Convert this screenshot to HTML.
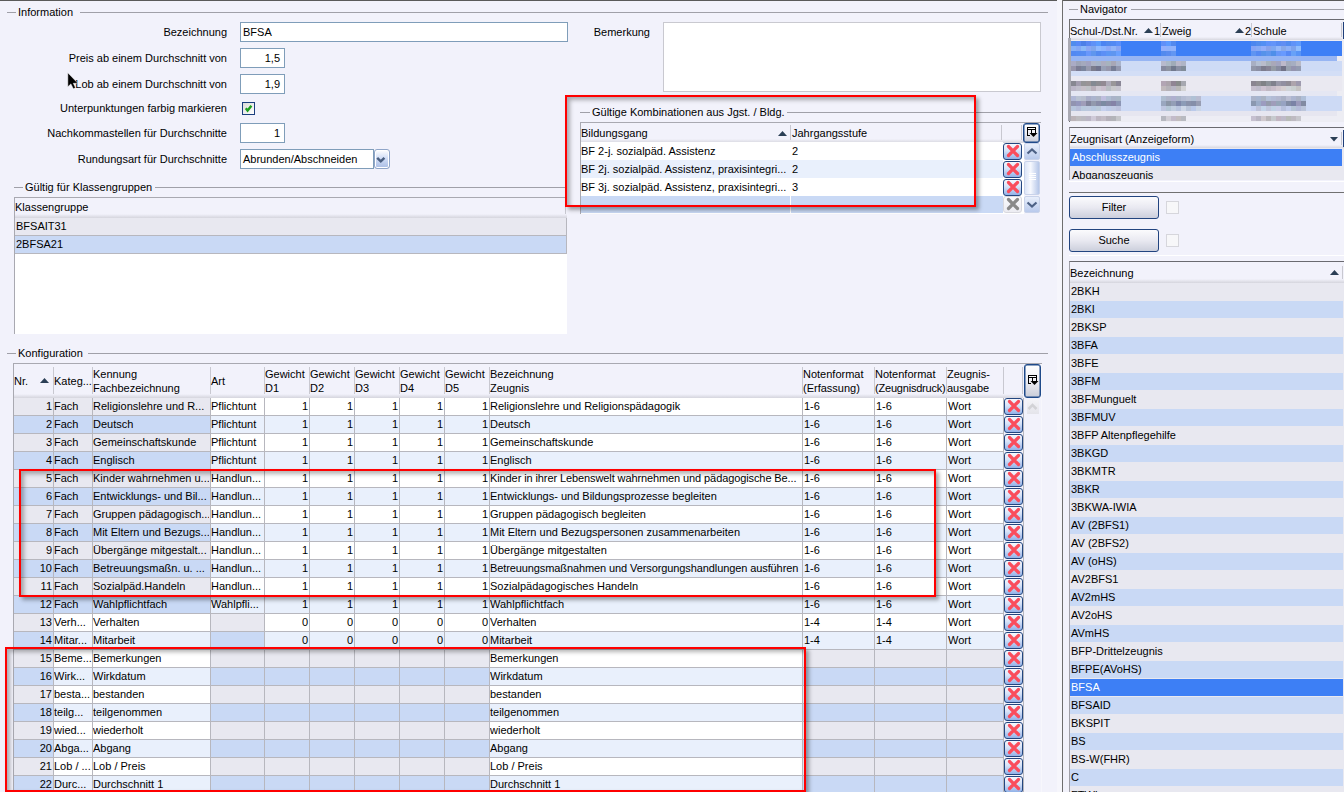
<!DOCTYPE html>
<html><head><meta charset="utf-8"><style>
html,body{margin:0;padding:0;}
body{width:1344px;height:792px;overflow:hidden;position:relative;background:#F2F2FB;font-family:"Liberation Sans",sans-serif;font-size:11px;color:#000;}
body div{position:absolute;white-space:nowrap;}
.inp{background:#fff;border:1px solid #7F9DB9;box-sizing:border-box;}
.db{width:19px;height:17px;box-sizing:border-box;border:1px solid #23467F;border-radius:3px;background:linear-gradient(#F6F8FD,#D6E2F8 45%,#91B2E8);}
.dbd{width:19px;height:17px;box-sizing:border-box;border:1px solid #D8D8DE;border-radius:3px;background:linear-gradient(#FAFAFC,#ECECF2);}
.db svg,.dbd svg{position:absolute;left:-1px;top:-1px;}
</style></head><body>

<div style="left:0px;top:0px;width:1057px;height:1px;background:#5A5A5A"></div>
<div style="left:1062px;top:0px;width:282px;height:1px;background:#5A5A5A"></div>
<div style="left:7px;top:12px;width:9px;height:1px;background:#A0A0A8"></div>
<div style="left:18px;top:6px;line-height:13px;">Information</div>
<div style="left:80px;top:12px;width:968px;height:1px;background:#A0A0A8"></div>
<div style="left:-173px;top:26px;line-height:13px;width:400px;text-align:right;">Bezeichnung</div>
<div style="left:-173px;top:52px;line-height:13px;width:400px;text-align:right;">Preis ab einem Durchschnitt von</div>
<div style="left:-173px;top:78px;line-height:13px;width:400px;text-align:right;">Lob ab einem Durchschnitt von</div>
<div style="left:-173px;top:102px;line-height:13px;width:400px;text-align:right;">Unterpunktungen farbig markieren</div>
<div style="left:-173px;top:127px;line-height:13px;width:400px;text-align:right;">Nachkommastellen f&uuml;r Durchschnitte</div>
<div style="left:-173px;top:153px;line-height:13px;width:400px;text-align:right;">Rundungsart f&uuml;r Durchschnitte</div>
<div class="inp" style="left:240px;top:22px;width:328px;height:20px"></div>
<div style="left:243px;top:26px;line-height:13px;">BFSA</div>
<div class="inp" style="left:240px;top:48px;width:45px;height:20px"></div>
<div style="left:-120px;top:52px;line-height:13px;width:400px;text-align:right;">1,5</div>
<div class="inp" style="left:240px;top:74px;width:45px;height:20px"></div>
<div style="left:-120px;top:78px;line-height:13px;width:400px;text-align:right;">1,9</div>
<div class="inp" style="left:240px;top:123px;width:45px;height:20px"></div>
<div style="left:-120px;top:127px;line-height:13px;width:400px;text-align:right;">1</div>
<div style="left:242px;top:102px;width:13px;height:13px;box-sizing:border-box;border:1px solid #1C3F7E;background:linear-gradient(135deg,#DCDCD7,#FFFFFF)"><svg width="11" height="11" style="position:absolute;left:0;top:0"><path d="M2.8 5.2L4.6 7.6L8.4 2.8" stroke="#1FA01F" stroke-width="2.4" fill="none"/></svg></div>
<div class="inp" style="left:240px;top:149px;width:134px;height:20px"></div>
<div style="left:243px;top:153px;line-height:13px;">Abrunden/Abschneiden</div>
<div style="left:374px;top:149px;width:16px;height:20px;box-sizing:border-box;border:1px solid #8FA5C8;border-radius:3px;box-shadow:inset 0 0 0 1px #FFFFFF;background:linear-gradient(#FFFFFF,#D2DEF6 45%,#A9BDE4)"><svg width="14" height="18" style="position:absolute;left:0;top:0"><path d="M2.2 7.8L5.8 11.4L9.4 7.8" stroke="#4A5F80" stroke-width="2.4" fill="none"/></svg></div>
<div style="left:250px;top:26px;line-height:13px;width:400px;text-align:right;">Bemerkung</div>
<div style="left:663px;top:22px;width:378px;height:70px;box-sizing:border-box;border:1px solid #C9C9D0;background:#fff"></div>
<svg style="position:absolute;left:67px;top:72px" width="14" height="20" viewBox="0 0 14 20"><path d="M0.8 0.8L0.8 14.8L3.9 11.9L6.3 16.8L8.5 15.8L6.3 11.3L10.9 11.3Z" fill="#000" stroke="#fff" stroke-width="0.5"/></svg>
<div style="left:14px;top:187px;width:9px;height:1px;background:#A0A0A8"></div>
<div style="left:25px;top:181px;line-height:13px;">G&uuml;ltig f&uuml;r Klassengruppen</div>
<div style="left:155px;top:187px;width:412px;height:1px;background:#A0A0A8"></div>
<div style="left:14px;top:197px;width:553px;height:137px;background:#fff;border-top:1px solid #A9A9B1;border-left:1px solid #A9A9B1;box-sizing:border-box"></div>
<div style="left:15px;top:198px;width:552px;height:20px;background:#F2F2FB"></div>
<div style="left:15px;top:214px;width:552px;height:4px;background:linear-gradient(#F2F2FB,#D5D5DD)"></div>
<div style="left:15px;top:201px;line-height:13px;">Klassengruppe</div>
<div style="left:15px;top:218px;width:552px;height:18px;background:#E8E8F0;border-bottom:1px solid #B7B7BE;box-sizing:border-box"></div>
<div style="left:16px;top:220px;line-height:13px;">BFSAIT31</div>
<div style="left:15px;top:236px;width:552px;height:18px;background:#C9D9F5;border-bottom:1px solid #B7B7BE;box-sizing:border-box"></div>
<div style="left:16px;top:238px;line-height:13px;">2BFSA21</div>
<div style="left:565px;top:199px;width:1px;height:15px;background:#C8C8D0"></div>
<div style="left:566px;top:218px;width:1px;height:36px;background:#B7B7BE"></div>
<div style="left:580px;top:112px;width:10px;height:1px;background:#A0A0A8"></div>
<div style="left:592px;top:106px;line-height:13px;">G&uuml;ltige Kombinationen aus Jgst. / Bldg.</div>
<div style="left:787px;top:112px;width:254px;height:1px;background:#A0A0A8"></div>
<div style="left:580px;top:122px;width:461px;height:92px;border-top:1px solid #A9A9B1;box-sizing:border-box"></div>
<div style="left:580px;top:122px;width:444px;height:92px;background:#fff;border-top:1px solid #A9A9B1;border-left:1px solid #A9A9B1;box-sizing:border-box"></div>
<div style="left:581px;top:123px;width:443px;height:19px;background:#F2F2FB"></div>
<div style="left:581px;top:139px;width:443px;height:4px;background:linear-gradient(#F2F2FB,#D5D5DD)"></div>
<div style="left:581px;top:127px;line-height:13px;">Bildungsgang</div>
<div style="left:792px;top:127px;line-height:13px;">Jahrgangsstufe</div>
<div style="left:790px;top:125px;width:1px;height:15px;background:#C8C8D0"></div>
<div style="left:1001px;top:125px;width:1px;height:15px;background:#C8C8D0"></div>
<div style="left:1021px;top:125px;width:1px;height:15px;background:#C8C8D0"></div>
<svg style="position:absolute;left:778px;top:131px" width="9" height="5"><path d="M0 5L4.5 0L9 5Z" fill="#2B3F55"/></svg>
<div style="left:581px;top:142px;width:422px;height:18px;background:#FFFFFF"></div>
<div style="left:581px;top:145px;line-height:13px;">BF 2-j. sozialp&auml;d. Assistenz</div>
<div style="left:792px;top:145px;line-height:13px;">2</div>
<div class="db" style="left:1003px;top:143px"><svg width="19" height="17" viewBox="0 0 19 17"><path d="M5.5 3.5L14.5 12.5M14.5 3.5L5.5 12.5" stroke="#FA4D5C" stroke-width="3.2" stroke-linecap="round"/></svg></div>
<div style="left:581px;top:160px;width:422px;height:18px;background:#E9F0FC"></div>
<div style="left:581px;top:163px;line-height:13px;">BF 2j. sozialp&auml;d. Assistenz, praxisintegri...</div>
<div style="left:792px;top:163px;line-height:13px;">2</div>
<div class="db" style="left:1003px;top:161px"><svg width="19" height="17" viewBox="0 0 19 17"><path d="M5.5 3.5L14.5 12.5M14.5 3.5L5.5 12.5" stroke="#FA4D5C" stroke-width="3.2" stroke-linecap="round"/></svg></div>
<div style="left:581px;top:178px;width:422px;height:18px;background:#FFFFFF"></div>
<div style="left:581px;top:181px;line-height:13px;">BF 3j. sozialp&auml;d. Assistenz, praxisintegri...</div>
<div style="left:792px;top:181px;line-height:13px;">3</div>
<div class="db" style="left:1003px;top:179px"><svg width="19" height="17" viewBox="0 0 19 17"><path d="M5.5 3.5L14.5 12.5M14.5 3.5L5.5 12.5" stroke="#FA4D5C" stroke-width="3.2" stroke-linecap="round"/></svg></div>
<div style="left:581px;top:196px;width:422px;height:17px;background:#C9D9F5"></div>
<div style="left:790px;top:196px;width:1px;height:17px;background:#fff"></div>
<div class="dbd" style="left:1003px;top:196px"><svg width="19" height="17" viewBox="0 0 19 17"><path d="M5.5 3.5L14.5 12.5M14.5 3.5L5.5 12.5" stroke="#8A8A8A" stroke-width="3.2" stroke-linecap="round"/></svg></div>
<div style="left:1023px;top:123px;width:17px;height:20px;box-sizing:border-box;border:1px solid #1F4A8A;border-radius:3px;box-shadow:inset 0 0 0 0.5px #1F4A8A;background:linear-gradient(#FFFFFF,#EEEEF4 50%,#C9CCD8)"><svg width="17" height="20" style="position:absolute;left:-1px;top:-1px"><path d="M4 4.5H13M4 6.5H13M4.5 4V13M12.5 4V10M8.5 6V10M4 12.5H7" stroke="#000" stroke-width="1" fill="none"/><path d="M5 5.5H12" stroke="#fff" stroke-width="1" stroke-dasharray="2 1"/><path d="M6.5 10H14.5L10.5 14Z" fill="#000"/></svg></div>
<div style="left:1024px;top:143px;width:16px;height:17px;box-sizing:border-box;border:1px solid #C9D3EA;border-radius:2px;background:linear-gradient(#E9EFFB,#B9CAEC)"><svg width="14" height="15" style="position:absolute;left:0;top:0"><path d="M2.5 9.5L7 5.5L11.5 9.5" stroke="#4D6185" stroke-width="2.2" fill="none"/></svg></div>
<div style="left:1024px;top:161px;width:16px;height:34px;box-sizing:border-box;border:1px solid #C9D3EA;border-radius:2px;background:linear-gradient(90deg,#DDE6F8,#F6F8FE 40%,#B5C6E8)"></div>
<div style="left:1029px;top:173px;width:7px;height:1px;background:#FFFFFF"></div>
<div style="left:1029px;top:175px;width:7px;height:1px;background:#FFFFFF"></div>
<div style="left:1029px;top:177px;width:7px;height:1px;background:#FFFFFF"></div>
<div style="left:1029px;top:179px;width:7px;height:1px;background:#FFFFFF"></div>
<div style="left:1024px;top:196px;width:16px;height:17px;box-sizing:border-box;border:1px solid #C9D3EA;border-radius:2px;background:linear-gradient(#E9EFFB,#B9CAEC)"><svg width="14" height="15" style="position:absolute;left:0;top:0"><path d="M2.5 5.5L7 9.5L11.5 5.5" stroke="#4D6185" stroke-width="2.2" fill="none"/></svg></div>
<div style="left:7px;top:353px;width:9px;height:1px;background:#A0A0A8"></div>
<div style="left:18px;top:347px;line-height:13px;">Konfiguration</div>
<div style="left:88px;top:353px;width:960px;height:1px;background:#A0A0A8"></div>
<div style="left:13px;top:363px;width:1029px;height:429px;border-top:1px solid #A9A9B1;border-left:1px solid #A9A9B1;box-sizing:border-box"></div>
<div style="left:14px;top:364px;width:1009px;height:34px;background:#F2F2FB"></div>
<div style="left:14px;top:394px;width:1009px;height:4px;background:linear-gradient(#F2F2FB,#D5D5DD)"></div>
<div style="left:1022px;top:367px;width:1px;height:27px;background:#C8C8D0"></div>
<div style="left:53px;top:367px;width:1px;height:27px;background:#C8C8D0"></div>
<div style="left:92px;top:367px;width:1px;height:27px;background:#C8C8D0"></div>
<div style="left:210px;top:367px;width:1px;height:27px;background:#C8C8D0"></div>
<div style="left:264px;top:367px;width:1px;height:27px;background:#C8C8D0"></div>
<div style="left:309px;top:367px;width:1px;height:27px;background:#C8C8D0"></div>
<div style="left:354px;top:367px;width:1px;height:27px;background:#C8C8D0"></div>
<div style="left:399px;top:367px;width:1px;height:27px;background:#C8C8D0"></div>
<div style="left:444px;top:367px;width:1px;height:27px;background:#C8C8D0"></div>
<div style="left:489px;top:367px;width:1px;height:27px;background:#C8C8D0"></div>
<div style="left:802px;top:367px;width:1px;height:27px;background:#C8C8D0"></div>
<div style="left:874px;top:367px;width:1px;height:27px;background:#C8C8D0"></div>
<div style="left:946px;top:367px;width:1px;height:27px;background:#C8C8D0"></div>
<div style="left:1003px;top:367px;width:1px;height:27px;background:#C8C8D0"></div>
<div style="left:14px;top:375px;line-height:13px;">Nr.</div>
<svg style="position:absolute;left:40px;top:378px" width="9" height="5"><path d="M0 5L4.5 0L9 5Z" fill="#2B3F55"/></svg>
<div style="left:54px;top:375px;line-height:13px;">Kateg...</div>
<div style="left:93px;top:368px;line-height:13px;">Kennung</div>
<div style="left:93px;top:382px;line-height:13px;">Fachbezeichnung</div>
<div style="left:265px;top:368px;line-height:13px;">Gewicht</div>
<div style="left:265px;top:382px;line-height:13px;">D1</div>
<div style="left:310px;top:368px;line-height:13px;">Gewicht</div>
<div style="left:310px;top:382px;line-height:13px;">D2</div>
<div style="left:355px;top:368px;line-height:13px;">Gewicht</div>
<div style="left:355px;top:382px;line-height:13px;">D3</div>
<div style="left:400px;top:368px;line-height:13px;">Gewicht</div>
<div style="left:400px;top:382px;line-height:13px;">D4</div>
<div style="left:445px;top:368px;line-height:13px;">Gewicht</div>
<div style="left:445px;top:382px;line-height:13px;">D5</div>
<div style="left:490px;top:368px;line-height:13px;">Bezeichnung</div>
<div style="left:490px;top:382px;line-height:13px;">Zeugnis</div>
<div style="left:803px;top:368px;line-height:13px;">Notenformat</div>
<div style="left:803px;top:382px;line-height:13px;">(Erfassung)</div>
<div style="left:875px;top:368px;line-height:13px;">Notenformat</div>
<div style="left:875px;top:382px;line-height:13px;letter-spacing:-0.2px">(Zeugnisdruck)</div>
<div style="left:947px;top:368px;line-height:13px;">Zeugnis-</div>
<div style="left:947px;top:382px;line-height:13px;">ausgabe</div>
<div style="left:211px;top:375px;line-height:13px;">Art</div>
<div style="left:1024px;top:364px;width:17px;height:34px;box-sizing:border-box;border:1px solid #1F4A8A;border-radius:3px;box-shadow:inset 0 0 0 0.5px #1F4A8A;background:linear-gradient(#FFFFFF,#EEEEF4 50%,#C9CCD8)"><svg width="17" height="34" style="position:absolute;left:-1px;top:-1px"><path d="M4 11.5H13M4 13.5H13M4.5 11V20M12.5 11V17M8.5 13V17M4 19.5H7" stroke="#000" stroke-width="1" fill="none"/><path d="M5 12.5H12" stroke="#fff" stroke-width="1" stroke-dasharray="2 1"/><path d="M6.5 17H14.5L10.5 21Z" fill="#000"/></svg></div>
<div style="left:1027px;top:399px;width:12px;height:15px;background:linear-gradient(#F4F4F8,#E4E4EA)"><svg width="12" height="15" style="position:absolute;left:0;top:0"><path d="M1.5 10L5.5 6L9.5 10" stroke="#D2D2D6" stroke-width="2.5" fill="none"/></svg></div>
<div style="left:14px;top:398px;width:39px;height:17px;background:#E8E8F0"></div>
<div style="left:54px;top:398px;width:38px;height:17px;background:#E8E8F0"></div>
<div style="left:93px;top:398px;width:117px;height:17px;background:#E8E8F0"></div>
<div style="left:211px;top:398px;width:53px;height:17px;background:#FFFFFF"></div>
<div style="left:265px;top:398px;width:44px;height:17px;background:#FFFFFF"></div>
<div style="left:310px;top:398px;width:44px;height:17px;background:#FFFFFF"></div>
<div style="left:355px;top:398px;width:44px;height:17px;background:#FFFFFF"></div>
<div style="left:400px;top:398px;width:44px;height:17px;background:#FFFFFF"></div>
<div style="left:445px;top:398px;width:44px;height:17px;background:#FFFFFF"></div>
<div style="left:490px;top:398px;width:312px;height:17px;background:#FFFFFF"></div>
<div style="left:803px;top:398px;width:71px;height:17px;background:#FFFFFF"></div>
<div style="left:875px;top:398px;width:71px;height:17px;background:#FFFFFF"></div>
<div style="left:947px;top:398px;width:56px;height:17px;background:#FFFFFF"></div>
<div style="left:14px;top:415px;width:989px;height:1px;background:#B7B7BE"></div>
<div style="left:-348px;top:400px;line-height:13px;width:400px;text-align:right;">1</div>
<div style="left:54px;top:400px;line-height:13px;overflow:hidden;width:38px">Fach</div>
<div style="left:93px;top:400px;line-height:13px;overflow:hidden;width:116px">Religionslehre und R...</div>
<div style="left:211px;top:400px;line-height:13px;">Pflichtunt</div>
<div style="left:-92px;top:400px;line-height:13px;width:400px;text-align:right;">1</div>
<div style="left:-47px;top:400px;line-height:13px;width:400px;text-align:right;">1</div>
<div style="left:-2px;top:400px;line-height:13px;width:400px;text-align:right;">1</div>
<div style="left:43px;top:400px;line-height:13px;width:400px;text-align:right;">1</div>
<div style="left:88px;top:400px;line-height:13px;width:400px;text-align:right;">1</div>
<div style="left:490px;top:400px;line-height:13px;">Religionslehre und Religionsp&auml;dagogik</div>
<div style="left:804px;top:400px;line-height:13px;">1-6</div>
<div style="left:876px;top:400px;line-height:13px;">1-6</div>
<div style="left:948px;top:400px;line-height:13px;">Wort</div>
<div class="db" style="left:1004px;top:398px"><svg width="19" height="17" viewBox="0 0 19 17"><path d="M5.5 3.5L14.5 12.5M14.5 3.5L5.5 12.5" stroke="#FA4D5C" stroke-width="3.2" stroke-linecap="round"/></svg></div>
<div style="left:14px;top:416px;width:39px;height:17px;background:#C9D9F5"></div>
<div style="left:54px;top:416px;width:38px;height:17px;background:#C9D9F5"></div>
<div style="left:93px;top:416px;width:117px;height:17px;background:#C9D9F5"></div>
<div style="left:211px;top:416px;width:53px;height:17px;background:#E9F0FC"></div>
<div style="left:265px;top:416px;width:44px;height:17px;background:#E9F0FC"></div>
<div style="left:310px;top:416px;width:44px;height:17px;background:#E9F0FC"></div>
<div style="left:355px;top:416px;width:44px;height:17px;background:#E9F0FC"></div>
<div style="left:400px;top:416px;width:44px;height:17px;background:#E9F0FC"></div>
<div style="left:445px;top:416px;width:44px;height:17px;background:#E9F0FC"></div>
<div style="left:490px;top:416px;width:312px;height:17px;background:#E9F0FC"></div>
<div style="left:803px;top:416px;width:71px;height:17px;background:#E9F0FC"></div>
<div style="left:875px;top:416px;width:71px;height:17px;background:#E9F0FC"></div>
<div style="left:947px;top:416px;width:56px;height:17px;background:#E9F0FC"></div>
<div style="left:14px;top:433px;width:989px;height:1px;background:#B7B7BE"></div>
<div style="left:-348px;top:418px;line-height:13px;width:400px;text-align:right;">2</div>
<div style="left:54px;top:418px;line-height:13px;overflow:hidden;width:38px">Fach</div>
<div style="left:93px;top:418px;line-height:13px;overflow:hidden;width:116px">Deutsch</div>
<div style="left:211px;top:418px;line-height:13px;">Pflichtunt</div>
<div style="left:-92px;top:418px;line-height:13px;width:400px;text-align:right;">1</div>
<div style="left:-47px;top:418px;line-height:13px;width:400px;text-align:right;">1</div>
<div style="left:-2px;top:418px;line-height:13px;width:400px;text-align:right;">1</div>
<div style="left:43px;top:418px;line-height:13px;width:400px;text-align:right;">1</div>
<div style="left:88px;top:418px;line-height:13px;width:400px;text-align:right;">1</div>
<div style="left:490px;top:418px;line-height:13px;">Deutsch</div>
<div style="left:804px;top:418px;line-height:13px;">1-6</div>
<div style="left:876px;top:418px;line-height:13px;">1-6</div>
<div style="left:948px;top:418px;line-height:13px;">Wort</div>
<div class="db" style="left:1004px;top:416px"><svg width="19" height="17" viewBox="0 0 19 17"><path d="M5.5 3.5L14.5 12.5M14.5 3.5L5.5 12.5" stroke="#FA4D5C" stroke-width="3.2" stroke-linecap="round"/></svg></div>
<div style="left:14px;top:434px;width:39px;height:17px;background:#E8E8F0"></div>
<div style="left:54px;top:434px;width:38px;height:17px;background:#E8E8F0"></div>
<div style="left:93px;top:434px;width:117px;height:17px;background:#E8E8F0"></div>
<div style="left:211px;top:434px;width:53px;height:17px;background:#FFFFFF"></div>
<div style="left:265px;top:434px;width:44px;height:17px;background:#FFFFFF"></div>
<div style="left:310px;top:434px;width:44px;height:17px;background:#FFFFFF"></div>
<div style="left:355px;top:434px;width:44px;height:17px;background:#FFFFFF"></div>
<div style="left:400px;top:434px;width:44px;height:17px;background:#FFFFFF"></div>
<div style="left:445px;top:434px;width:44px;height:17px;background:#FFFFFF"></div>
<div style="left:490px;top:434px;width:312px;height:17px;background:#FFFFFF"></div>
<div style="left:803px;top:434px;width:71px;height:17px;background:#FFFFFF"></div>
<div style="left:875px;top:434px;width:71px;height:17px;background:#FFFFFF"></div>
<div style="left:947px;top:434px;width:56px;height:17px;background:#FFFFFF"></div>
<div style="left:14px;top:451px;width:989px;height:1px;background:#B7B7BE"></div>
<div style="left:-348px;top:436px;line-height:13px;width:400px;text-align:right;">3</div>
<div style="left:54px;top:436px;line-height:13px;overflow:hidden;width:38px">Fach</div>
<div style="left:93px;top:436px;line-height:13px;overflow:hidden;width:116px">Gemeinschaftskunde</div>
<div style="left:211px;top:436px;line-height:13px;">Pflichtunt</div>
<div style="left:-92px;top:436px;line-height:13px;width:400px;text-align:right;">1</div>
<div style="left:-47px;top:436px;line-height:13px;width:400px;text-align:right;">1</div>
<div style="left:-2px;top:436px;line-height:13px;width:400px;text-align:right;">1</div>
<div style="left:43px;top:436px;line-height:13px;width:400px;text-align:right;">1</div>
<div style="left:88px;top:436px;line-height:13px;width:400px;text-align:right;">1</div>
<div style="left:490px;top:436px;line-height:13px;">Gemeinschaftskunde</div>
<div style="left:804px;top:436px;line-height:13px;">1-6</div>
<div style="left:876px;top:436px;line-height:13px;">1-6</div>
<div style="left:948px;top:436px;line-height:13px;">Wort</div>
<div class="db" style="left:1004px;top:434px"><svg width="19" height="17" viewBox="0 0 19 17"><path d="M5.5 3.5L14.5 12.5M14.5 3.5L5.5 12.5" stroke="#FA4D5C" stroke-width="3.2" stroke-linecap="round"/></svg></div>
<div style="left:14px;top:452px;width:39px;height:17px;background:#C9D9F5"></div>
<div style="left:54px;top:452px;width:38px;height:17px;background:#C9D9F5"></div>
<div style="left:93px;top:452px;width:117px;height:17px;background:#C9D9F5"></div>
<div style="left:211px;top:452px;width:53px;height:17px;background:#E9F0FC"></div>
<div style="left:265px;top:452px;width:44px;height:17px;background:#E9F0FC"></div>
<div style="left:310px;top:452px;width:44px;height:17px;background:#E9F0FC"></div>
<div style="left:355px;top:452px;width:44px;height:17px;background:#E9F0FC"></div>
<div style="left:400px;top:452px;width:44px;height:17px;background:#E9F0FC"></div>
<div style="left:445px;top:452px;width:44px;height:17px;background:#E9F0FC"></div>
<div style="left:490px;top:452px;width:312px;height:17px;background:#E9F0FC"></div>
<div style="left:803px;top:452px;width:71px;height:17px;background:#E9F0FC"></div>
<div style="left:875px;top:452px;width:71px;height:17px;background:#E9F0FC"></div>
<div style="left:947px;top:452px;width:56px;height:17px;background:#E9F0FC"></div>
<div style="left:14px;top:469px;width:989px;height:1px;background:#B7B7BE"></div>
<div style="left:-348px;top:454px;line-height:13px;width:400px;text-align:right;">4</div>
<div style="left:54px;top:454px;line-height:13px;overflow:hidden;width:38px">Fach</div>
<div style="left:93px;top:454px;line-height:13px;overflow:hidden;width:116px">Englisch</div>
<div style="left:211px;top:454px;line-height:13px;">Pflichtunt</div>
<div style="left:-92px;top:454px;line-height:13px;width:400px;text-align:right;">1</div>
<div style="left:-47px;top:454px;line-height:13px;width:400px;text-align:right;">1</div>
<div style="left:-2px;top:454px;line-height:13px;width:400px;text-align:right;">1</div>
<div style="left:43px;top:454px;line-height:13px;width:400px;text-align:right;">1</div>
<div style="left:88px;top:454px;line-height:13px;width:400px;text-align:right;">1</div>
<div style="left:490px;top:454px;line-height:13px;">Englisch</div>
<div style="left:804px;top:454px;line-height:13px;">1-6</div>
<div style="left:876px;top:454px;line-height:13px;">1-6</div>
<div style="left:948px;top:454px;line-height:13px;">Wort</div>
<div class="db" style="left:1004px;top:452px"><svg width="19" height="17" viewBox="0 0 19 17"><path d="M5.5 3.5L14.5 12.5M14.5 3.5L5.5 12.5" stroke="#FA4D5C" stroke-width="3.2" stroke-linecap="round"/></svg></div>
<div style="left:14px;top:470px;width:39px;height:17px;background:#E8E8F0"></div>
<div style="left:54px;top:470px;width:38px;height:17px;background:#E8E8F0"></div>
<div style="left:93px;top:470px;width:117px;height:17px;background:#E8E8F0"></div>
<div style="left:211px;top:470px;width:53px;height:17px;background:#FFFFFF"></div>
<div style="left:265px;top:470px;width:44px;height:17px;background:#FFFFFF"></div>
<div style="left:310px;top:470px;width:44px;height:17px;background:#FFFFFF"></div>
<div style="left:355px;top:470px;width:44px;height:17px;background:#FFFFFF"></div>
<div style="left:400px;top:470px;width:44px;height:17px;background:#FFFFFF"></div>
<div style="left:445px;top:470px;width:44px;height:17px;background:#FFFFFF"></div>
<div style="left:490px;top:470px;width:312px;height:17px;background:#FFFFFF"></div>
<div style="left:803px;top:470px;width:71px;height:17px;background:#FFFFFF"></div>
<div style="left:875px;top:470px;width:71px;height:17px;background:#FFFFFF"></div>
<div style="left:947px;top:470px;width:56px;height:17px;background:#FFFFFF"></div>
<div style="left:14px;top:487px;width:989px;height:1px;background:#B7B7BE"></div>
<div style="left:-348px;top:472px;line-height:13px;width:400px;text-align:right;">5</div>
<div style="left:54px;top:472px;line-height:13px;overflow:hidden;width:38px">Fach</div>
<div style="left:93px;top:472px;line-height:13px;overflow:hidden;width:116px">Kinder wahrnehmen u...</div>
<div style="left:211px;top:472px;line-height:13px;">Handlun...</div>
<div style="left:-92px;top:472px;line-height:13px;width:400px;text-align:right;">1</div>
<div style="left:-47px;top:472px;line-height:13px;width:400px;text-align:right;">1</div>
<div style="left:-2px;top:472px;line-height:13px;width:400px;text-align:right;">1</div>
<div style="left:43px;top:472px;line-height:13px;width:400px;text-align:right;">1</div>
<div style="left:88px;top:472px;line-height:13px;width:400px;text-align:right;">1</div>
<div style="left:490px;top:472px;line-height:13px;letter-spacing:-0.1px">Kinder in ihrer Lebenswelt wahrnehmen und p&auml;dagogische Be...</div>
<div style="left:804px;top:472px;line-height:13px;">1-6</div>
<div style="left:876px;top:472px;line-height:13px;">1-6</div>
<div style="left:948px;top:472px;line-height:13px;">Wort</div>
<div class="db" style="left:1004px;top:470px"><svg width="19" height="17" viewBox="0 0 19 17"><path d="M5.5 3.5L14.5 12.5M14.5 3.5L5.5 12.5" stroke="#FA4D5C" stroke-width="3.2" stroke-linecap="round"/></svg></div>
<div style="left:14px;top:488px;width:39px;height:17px;background:#C9D9F5"></div>
<div style="left:54px;top:488px;width:38px;height:17px;background:#C9D9F5"></div>
<div style="left:93px;top:488px;width:117px;height:17px;background:#C9D9F5"></div>
<div style="left:211px;top:488px;width:53px;height:17px;background:#E9F0FC"></div>
<div style="left:265px;top:488px;width:44px;height:17px;background:#E9F0FC"></div>
<div style="left:310px;top:488px;width:44px;height:17px;background:#E9F0FC"></div>
<div style="left:355px;top:488px;width:44px;height:17px;background:#E9F0FC"></div>
<div style="left:400px;top:488px;width:44px;height:17px;background:#E9F0FC"></div>
<div style="left:445px;top:488px;width:44px;height:17px;background:#E9F0FC"></div>
<div style="left:490px;top:488px;width:312px;height:17px;background:#E9F0FC"></div>
<div style="left:803px;top:488px;width:71px;height:17px;background:#E9F0FC"></div>
<div style="left:875px;top:488px;width:71px;height:17px;background:#E9F0FC"></div>
<div style="left:947px;top:488px;width:56px;height:17px;background:#E9F0FC"></div>
<div style="left:14px;top:505px;width:989px;height:1px;background:#B7B7BE"></div>
<div style="left:-348px;top:490px;line-height:13px;width:400px;text-align:right;">6</div>
<div style="left:54px;top:490px;line-height:13px;overflow:hidden;width:38px">Fach</div>
<div style="left:93px;top:490px;line-height:13px;overflow:hidden;width:116px">Entwicklungs- und Bil...</div>
<div style="left:211px;top:490px;line-height:13px;">Handlun...</div>
<div style="left:-92px;top:490px;line-height:13px;width:400px;text-align:right;">1</div>
<div style="left:-47px;top:490px;line-height:13px;width:400px;text-align:right;">1</div>
<div style="left:-2px;top:490px;line-height:13px;width:400px;text-align:right;">1</div>
<div style="left:43px;top:490px;line-height:13px;width:400px;text-align:right;">1</div>
<div style="left:88px;top:490px;line-height:13px;width:400px;text-align:right;">1</div>
<div style="left:490px;top:490px;line-height:13px;">Entwicklungs- und Bildungsprozesse begleiten</div>
<div style="left:804px;top:490px;line-height:13px;">1-6</div>
<div style="left:876px;top:490px;line-height:13px;">1-6</div>
<div style="left:948px;top:490px;line-height:13px;">Wort</div>
<div class="db" style="left:1004px;top:488px"><svg width="19" height="17" viewBox="0 0 19 17"><path d="M5.5 3.5L14.5 12.5M14.5 3.5L5.5 12.5" stroke="#FA4D5C" stroke-width="3.2" stroke-linecap="round"/></svg></div>
<div style="left:14px;top:506px;width:39px;height:17px;background:#E8E8F0"></div>
<div style="left:54px;top:506px;width:38px;height:17px;background:#E8E8F0"></div>
<div style="left:93px;top:506px;width:117px;height:17px;background:#E8E8F0"></div>
<div style="left:211px;top:506px;width:53px;height:17px;background:#FFFFFF"></div>
<div style="left:265px;top:506px;width:44px;height:17px;background:#FFFFFF"></div>
<div style="left:310px;top:506px;width:44px;height:17px;background:#FFFFFF"></div>
<div style="left:355px;top:506px;width:44px;height:17px;background:#FFFFFF"></div>
<div style="left:400px;top:506px;width:44px;height:17px;background:#FFFFFF"></div>
<div style="left:445px;top:506px;width:44px;height:17px;background:#FFFFFF"></div>
<div style="left:490px;top:506px;width:312px;height:17px;background:#FFFFFF"></div>
<div style="left:803px;top:506px;width:71px;height:17px;background:#FFFFFF"></div>
<div style="left:875px;top:506px;width:71px;height:17px;background:#FFFFFF"></div>
<div style="left:947px;top:506px;width:56px;height:17px;background:#FFFFFF"></div>
<div style="left:14px;top:523px;width:989px;height:1px;background:#B7B7BE"></div>
<div style="left:-348px;top:508px;line-height:13px;width:400px;text-align:right;">7</div>
<div style="left:54px;top:508px;line-height:13px;overflow:hidden;width:38px">Fach</div>
<div style="left:93px;top:508px;line-height:13px;overflow:hidden;width:116px">Gruppen p&auml;dagogisch...</div>
<div style="left:211px;top:508px;line-height:13px;">Handlun...</div>
<div style="left:-92px;top:508px;line-height:13px;width:400px;text-align:right;">1</div>
<div style="left:-47px;top:508px;line-height:13px;width:400px;text-align:right;">1</div>
<div style="left:-2px;top:508px;line-height:13px;width:400px;text-align:right;">1</div>
<div style="left:43px;top:508px;line-height:13px;width:400px;text-align:right;">1</div>
<div style="left:88px;top:508px;line-height:13px;width:400px;text-align:right;">1</div>
<div style="left:490px;top:508px;line-height:13px;">Gruppen p&auml;dagogisch begleiten</div>
<div style="left:804px;top:508px;line-height:13px;">1-6</div>
<div style="left:876px;top:508px;line-height:13px;">1-6</div>
<div style="left:948px;top:508px;line-height:13px;">Wort</div>
<div class="db" style="left:1004px;top:506px"><svg width="19" height="17" viewBox="0 0 19 17"><path d="M5.5 3.5L14.5 12.5M14.5 3.5L5.5 12.5" stroke="#FA4D5C" stroke-width="3.2" stroke-linecap="round"/></svg></div>
<div style="left:14px;top:524px;width:39px;height:17px;background:#C9D9F5"></div>
<div style="left:54px;top:524px;width:38px;height:17px;background:#C9D9F5"></div>
<div style="left:93px;top:524px;width:117px;height:17px;background:#C9D9F5"></div>
<div style="left:211px;top:524px;width:53px;height:17px;background:#E9F0FC"></div>
<div style="left:265px;top:524px;width:44px;height:17px;background:#E9F0FC"></div>
<div style="left:310px;top:524px;width:44px;height:17px;background:#E9F0FC"></div>
<div style="left:355px;top:524px;width:44px;height:17px;background:#E9F0FC"></div>
<div style="left:400px;top:524px;width:44px;height:17px;background:#E9F0FC"></div>
<div style="left:445px;top:524px;width:44px;height:17px;background:#E9F0FC"></div>
<div style="left:490px;top:524px;width:312px;height:17px;background:#E9F0FC"></div>
<div style="left:803px;top:524px;width:71px;height:17px;background:#E9F0FC"></div>
<div style="left:875px;top:524px;width:71px;height:17px;background:#E9F0FC"></div>
<div style="left:947px;top:524px;width:56px;height:17px;background:#E9F0FC"></div>
<div style="left:14px;top:541px;width:989px;height:1px;background:#B7B7BE"></div>
<div style="left:-348px;top:526px;line-height:13px;width:400px;text-align:right;">8</div>
<div style="left:54px;top:526px;line-height:13px;overflow:hidden;width:38px">Fach</div>
<div style="left:93px;top:526px;line-height:13px;overflow:hidden;width:116px">Mit Eltern und Bezugs...</div>
<div style="left:211px;top:526px;line-height:13px;">Handlun...</div>
<div style="left:-92px;top:526px;line-height:13px;width:400px;text-align:right;">1</div>
<div style="left:-47px;top:526px;line-height:13px;width:400px;text-align:right;">1</div>
<div style="left:-2px;top:526px;line-height:13px;width:400px;text-align:right;">1</div>
<div style="left:43px;top:526px;line-height:13px;width:400px;text-align:right;">1</div>
<div style="left:88px;top:526px;line-height:13px;width:400px;text-align:right;">1</div>
<div style="left:490px;top:526px;line-height:13px;">Mit Eltern und Bezugspersonen zusammenarbeiten</div>
<div style="left:804px;top:526px;line-height:13px;">1-6</div>
<div style="left:876px;top:526px;line-height:13px;">1-6</div>
<div style="left:948px;top:526px;line-height:13px;">Wort</div>
<div class="db" style="left:1004px;top:524px"><svg width="19" height="17" viewBox="0 0 19 17"><path d="M5.5 3.5L14.5 12.5M14.5 3.5L5.5 12.5" stroke="#FA4D5C" stroke-width="3.2" stroke-linecap="round"/></svg></div>
<div style="left:14px;top:542px;width:39px;height:17px;background:#E8E8F0"></div>
<div style="left:54px;top:542px;width:38px;height:17px;background:#E8E8F0"></div>
<div style="left:93px;top:542px;width:117px;height:17px;background:#E8E8F0"></div>
<div style="left:211px;top:542px;width:53px;height:17px;background:#FFFFFF"></div>
<div style="left:265px;top:542px;width:44px;height:17px;background:#FFFFFF"></div>
<div style="left:310px;top:542px;width:44px;height:17px;background:#FFFFFF"></div>
<div style="left:355px;top:542px;width:44px;height:17px;background:#FFFFFF"></div>
<div style="left:400px;top:542px;width:44px;height:17px;background:#FFFFFF"></div>
<div style="left:445px;top:542px;width:44px;height:17px;background:#FFFFFF"></div>
<div style="left:490px;top:542px;width:312px;height:17px;background:#FFFFFF"></div>
<div style="left:803px;top:542px;width:71px;height:17px;background:#FFFFFF"></div>
<div style="left:875px;top:542px;width:71px;height:17px;background:#FFFFFF"></div>
<div style="left:947px;top:542px;width:56px;height:17px;background:#FFFFFF"></div>
<div style="left:14px;top:559px;width:989px;height:1px;background:#B7B7BE"></div>
<div style="left:-348px;top:544px;line-height:13px;width:400px;text-align:right;">9</div>
<div style="left:54px;top:544px;line-height:13px;overflow:hidden;width:38px">Fach</div>
<div style="left:93px;top:544px;line-height:13px;overflow:hidden;width:116px">&Uuml;berg&auml;nge mitgestalt...</div>
<div style="left:211px;top:544px;line-height:13px;">Handlun...</div>
<div style="left:-92px;top:544px;line-height:13px;width:400px;text-align:right;">1</div>
<div style="left:-47px;top:544px;line-height:13px;width:400px;text-align:right;">1</div>
<div style="left:-2px;top:544px;line-height:13px;width:400px;text-align:right;">1</div>
<div style="left:43px;top:544px;line-height:13px;width:400px;text-align:right;">1</div>
<div style="left:88px;top:544px;line-height:13px;width:400px;text-align:right;">1</div>
<div style="left:490px;top:544px;line-height:13px;">&Uuml;berg&auml;nge mitgestalten</div>
<div style="left:804px;top:544px;line-height:13px;">1-6</div>
<div style="left:876px;top:544px;line-height:13px;">1-6</div>
<div style="left:948px;top:544px;line-height:13px;">Wort</div>
<div class="db" style="left:1004px;top:542px"><svg width="19" height="17" viewBox="0 0 19 17"><path d="M5.5 3.5L14.5 12.5M14.5 3.5L5.5 12.5" stroke="#FA4D5C" stroke-width="3.2" stroke-linecap="round"/></svg></div>
<div style="left:14px;top:560px;width:39px;height:17px;background:#C9D9F5"></div>
<div style="left:54px;top:560px;width:38px;height:17px;background:#C9D9F5"></div>
<div style="left:93px;top:560px;width:117px;height:17px;background:#C9D9F5"></div>
<div style="left:211px;top:560px;width:53px;height:17px;background:#E9F0FC"></div>
<div style="left:265px;top:560px;width:44px;height:17px;background:#E9F0FC"></div>
<div style="left:310px;top:560px;width:44px;height:17px;background:#E9F0FC"></div>
<div style="left:355px;top:560px;width:44px;height:17px;background:#E9F0FC"></div>
<div style="left:400px;top:560px;width:44px;height:17px;background:#E9F0FC"></div>
<div style="left:445px;top:560px;width:44px;height:17px;background:#E9F0FC"></div>
<div style="left:490px;top:560px;width:312px;height:17px;background:#E9F0FC"></div>
<div style="left:803px;top:560px;width:71px;height:17px;background:#E9F0FC"></div>
<div style="left:875px;top:560px;width:71px;height:17px;background:#E9F0FC"></div>
<div style="left:947px;top:560px;width:56px;height:17px;background:#E9F0FC"></div>
<div style="left:14px;top:577px;width:989px;height:1px;background:#B7B7BE"></div>
<div style="left:-348px;top:562px;line-height:13px;width:400px;text-align:right;">10</div>
<div style="left:54px;top:562px;line-height:13px;overflow:hidden;width:38px">Fach</div>
<div style="left:93px;top:562px;line-height:13px;overflow:hidden;width:116px">Betreuungsma&szlig;n. u. ...</div>
<div style="left:211px;top:562px;line-height:13px;">Handlun...</div>
<div style="left:-92px;top:562px;line-height:13px;width:400px;text-align:right;">1</div>
<div style="left:-47px;top:562px;line-height:13px;width:400px;text-align:right;">1</div>
<div style="left:-2px;top:562px;line-height:13px;width:400px;text-align:right;">1</div>
<div style="left:43px;top:562px;line-height:13px;width:400px;text-align:right;">1</div>
<div style="left:88px;top:562px;line-height:13px;width:400px;text-align:right;">1</div>
<div style="left:490px;top:562px;line-height:13px;letter-spacing:-0.1px">Betreuungsma&szlig;nahmen und Versorgungshandlungen ausf&uuml;hren</div>
<div style="left:804px;top:562px;line-height:13px;">1-6</div>
<div style="left:876px;top:562px;line-height:13px;">1-6</div>
<div style="left:948px;top:562px;line-height:13px;">Wort</div>
<div class="db" style="left:1004px;top:560px"><svg width="19" height="17" viewBox="0 0 19 17"><path d="M5.5 3.5L14.5 12.5M14.5 3.5L5.5 12.5" stroke="#FA4D5C" stroke-width="3.2" stroke-linecap="round"/></svg></div>
<div style="left:14px;top:578px;width:39px;height:17px;background:#E8E8F0"></div>
<div style="left:54px;top:578px;width:38px;height:17px;background:#E8E8F0"></div>
<div style="left:93px;top:578px;width:117px;height:17px;background:#E8E8F0"></div>
<div style="left:211px;top:578px;width:53px;height:17px;background:#FFFFFF"></div>
<div style="left:265px;top:578px;width:44px;height:17px;background:#FFFFFF"></div>
<div style="left:310px;top:578px;width:44px;height:17px;background:#FFFFFF"></div>
<div style="left:355px;top:578px;width:44px;height:17px;background:#FFFFFF"></div>
<div style="left:400px;top:578px;width:44px;height:17px;background:#FFFFFF"></div>
<div style="left:445px;top:578px;width:44px;height:17px;background:#FFFFFF"></div>
<div style="left:490px;top:578px;width:312px;height:17px;background:#FFFFFF"></div>
<div style="left:803px;top:578px;width:71px;height:17px;background:#FFFFFF"></div>
<div style="left:875px;top:578px;width:71px;height:17px;background:#FFFFFF"></div>
<div style="left:947px;top:578px;width:56px;height:17px;background:#FFFFFF"></div>
<div style="left:14px;top:595px;width:989px;height:1px;background:#B7B7BE"></div>
<div style="left:-348px;top:580px;line-height:13px;width:400px;text-align:right;">11</div>
<div style="left:54px;top:580px;line-height:13px;overflow:hidden;width:38px">Fach</div>
<div style="left:93px;top:580px;line-height:13px;overflow:hidden;width:116px">Sozialp&auml;d.Handeln</div>
<div style="left:211px;top:580px;line-height:13px;">Handlun...</div>
<div style="left:-92px;top:580px;line-height:13px;width:400px;text-align:right;">1</div>
<div style="left:-47px;top:580px;line-height:13px;width:400px;text-align:right;">1</div>
<div style="left:-2px;top:580px;line-height:13px;width:400px;text-align:right;">1</div>
<div style="left:43px;top:580px;line-height:13px;width:400px;text-align:right;">1</div>
<div style="left:88px;top:580px;line-height:13px;width:400px;text-align:right;">1</div>
<div style="left:490px;top:580px;line-height:13px;">Sozialp&auml;dagogisches Handeln</div>
<div style="left:804px;top:580px;line-height:13px;">1-6</div>
<div style="left:876px;top:580px;line-height:13px;">1-6</div>
<div style="left:948px;top:580px;line-height:13px;">Wort</div>
<div class="db" style="left:1004px;top:578px"><svg width="19" height="17" viewBox="0 0 19 17"><path d="M5.5 3.5L14.5 12.5M14.5 3.5L5.5 12.5" stroke="#FA4D5C" stroke-width="3.2" stroke-linecap="round"/></svg></div>
<div style="left:14px;top:596px;width:39px;height:17px;background:#C9D9F5"></div>
<div style="left:54px;top:596px;width:38px;height:17px;background:#C9D9F5"></div>
<div style="left:93px;top:596px;width:117px;height:17px;background:#C9D9F5"></div>
<div style="left:211px;top:596px;width:53px;height:17px;background:#E9F0FC"></div>
<div style="left:265px;top:596px;width:44px;height:17px;background:#E9F0FC"></div>
<div style="left:310px;top:596px;width:44px;height:17px;background:#E9F0FC"></div>
<div style="left:355px;top:596px;width:44px;height:17px;background:#E9F0FC"></div>
<div style="left:400px;top:596px;width:44px;height:17px;background:#E9F0FC"></div>
<div style="left:445px;top:596px;width:44px;height:17px;background:#E9F0FC"></div>
<div style="left:490px;top:596px;width:312px;height:17px;background:#E9F0FC"></div>
<div style="left:803px;top:596px;width:71px;height:17px;background:#E9F0FC"></div>
<div style="left:875px;top:596px;width:71px;height:17px;background:#E9F0FC"></div>
<div style="left:947px;top:596px;width:56px;height:17px;background:#E9F0FC"></div>
<div style="left:14px;top:613px;width:989px;height:1px;background:#B7B7BE"></div>
<div style="left:-348px;top:598px;line-height:13px;width:400px;text-align:right;">12</div>
<div style="left:54px;top:598px;line-height:13px;overflow:hidden;width:38px">Fach</div>
<div style="left:93px;top:598px;line-height:13px;overflow:hidden;width:116px">Wahlpflichtfach</div>
<div style="left:211px;top:598px;line-height:13px;">Wahlpfli...</div>
<div style="left:-92px;top:598px;line-height:13px;width:400px;text-align:right;">1</div>
<div style="left:-47px;top:598px;line-height:13px;width:400px;text-align:right;">1</div>
<div style="left:-2px;top:598px;line-height:13px;width:400px;text-align:right;">1</div>
<div style="left:43px;top:598px;line-height:13px;width:400px;text-align:right;">1</div>
<div style="left:88px;top:598px;line-height:13px;width:400px;text-align:right;">1</div>
<div style="left:490px;top:598px;line-height:13px;">Wahlpflichtfach</div>
<div style="left:804px;top:598px;line-height:13px;">1-6</div>
<div style="left:876px;top:598px;line-height:13px;">1-6</div>
<div style="left:948px;top:598px;line-height:13px;">Wort</div>
<div class="db" style="left:1004px;top:596px"><svg width="19" height="17" viewBox="0 0 19 17"><path d="M5.5 3.5L14.5 12.5M14.5 3.5L5.5 12.5" stroke="#FA4D5C" stroke-width="3.2" stroke-linecap="round"/></svg></div>
<div style="left:14px;top:614px;width:39px;height:17px;background:#E8E8F0"></div>
<div style="left:54px;top:614px;width:38px;height:17px;background:#FFFFFF"></div>
<div style="left:93px;top:614px;width:117px;height:17px;background:#FFFFFF"></div>
<div style="left:211px;top:614px;width:53px;height:17px;background:#E8E8F0"></div>
<div style="left:265px;top:614px;width:44px;height:17px;background:#FFFFFF"></div>
<div style="left:310px;top:614px;width:44px;height:17px;background:#FFFFFF"></div>
<div style="left:355px;top:614px;width:44px;height:17px;background:#FFFFFF"></div>
<div style="left:400px;top:614px;width:44px;height:17px;background:#FFFFFF"></div>
<div style="left:445px;top:614px;width:44px;height:17px;background:#FFFFFF"></div>
<div style="left:490px;top:614px;width:312px;height:17px;background:#FFFFFF"></div>
<div style="left:803px;top:614px;width:71px;height:17px;background:#FFFFFF"></div>
<div style="left:875px;top:614px;width:71px;height:17px;background:#FFFFFF"></div>
<div style="left:947px;top:614px;width:56px;height:17px;background:#FFFFFF"></div>
<div style="left:14px;top:631px;width:989px;height:1px;background:#B7B7BE"></div>
<div style="left:-348px;top:616px;line-height:13px;width:400px;text-align:right;">13</div>
<div style="left:54px;top:616px;line-height:13px;overflow:hidden;width:38px">Verh...</div>
<div style="left:93px;top:616px;line-height:13px;overflow:hidden;width:116px">Verhalten</div>
<div style="left:-92px;top:616px;line-height:13px;width:400px;text-align:right;">0</div>
<div style="left:-47px;top:616px;line-height:13px;width:400px;text-align:right;">0</div>
<div style="left:-2px;top:616px;line-height:13px;width:400px;text-align:right;">0</div>
<div style="left:43px;top:616px;line-height:13px;width:400px;text-align:right;">0</div>
<div style="left:88px;top:616px;line-height:13px;width:400px;text-align:right;">0</div>
<div style="left:490px;top:616px;line-height:13px;">Verhalten</div>
<div style="left:804px;top:616px;line-height:13px;">1-4</div>
<div style="left:876px;top:616px;line-height:13px;">1-4</div>
<div style="left:948px;top:616px;line-height:13px;">Wort</div>
<div class="db" style="left:1004px;top:614px"><svg width="19" height="17" viewBox="0 0 19 17"><path d="M5.5 3.5L14.5 12.5M14.5 3.5L5.5 12.5" stroke="#FA4D5C" stroke-width="3.2" stroke-linecap="round"/></svg></div>
<div style="left:14px;top:632px;width:39px;height:17px;background:#C9D9F5"></div>
<div style="left:54px;top:632px;width:38px;height:17px;background:#E9F0FC"></div>
<div style="left:93px;top:632px;width:117px;height:17px;background:#E9F0FC"></div>
<div style="left:211px;top:632px;width:53px;height:17px;background:#C9D9F5"></div>
<div style="left:265px;top:632px;width:44px;height:17px;background:#E9F0FC"></div>
<div style="left:310px;top:632px;width:44px;height:17px;background:#E9F0FC"></div>
<div style="left:355px;top:632px;width:44px;height:17px;background:#E9F0FC"></div>
<div style="left:400px;top:632px;width:44px;height:17px;background:#E9F0FC"></div>
<div style="left:445px;top:632px;width:44px;height:17px;background:#E9F0FC"></div>
<div style="left:490px;top:632px;width:312px;height:17px;background:#E9F0FC"></div>
<div style="left:803px;top:632px;width:71px;height:17px;background:#E9F0FC"></div>
<div style="left:875px;top:632px;width:71px;height:17px;background:#E9F0FC"></div>
<div style="left:947px;top:632px;width:56px;height:17px;background:#E9F0FC"></div>
<div style="left:14px;top:649px;width:989px;height:1px;background:#B7B7BE"></div>
<div style="left:-348px;top:634px;line-height:13px;width:400px;text-align:right;">14</div>
<div style="left:54px;top:634px;line-height:13px;overflow:hidden;width:38px">Mitar...</div>
<div style="left:93px;top:634px;line-height:13px;overflow:hidden;width:116px">Mitarbeit</div>
<div style="left:-92px;top:634px;line-height:13px;width:400px;text-align:right;">0</div>
<div style="left:-47px;top:634px;line-height:13px;width:400px;text-align:right;">0</div>
<div style="left:-2px;top:634px;line-height:13px;width:400px;text-align:right;">0</div>
<div style="left:43px;top:634px;line-height:13px;width:400px;text-align:right;">0</div>
<div style="left:88px;top:634px;line-height:13px;width:400px;text-align:right;">0</div>
<div style="left:490px;top:634px;line-height:13px;">Mitarbeit</div>
<div style="left:804px;top:634px;line-height:13px;">1-4</div>
<div style="left:876px;top:634px;line-height:13px;">1-4</div>
<div style="left:948px;top:634px;line-height:13px;">Wort</div>
<div class="db" style="left:1004px;top:632px"><svg width="19" height="17" viewBox="0 0 19 17"><path d="M5.5 3.5L14.5 12.5M14.5 3.5L5.5 12.5" stroke="#FA4D5C" stroke-width="3.2" stroke-linecap="round"/></svg></div>
<div style="left:14px;top:650px;width:39px;height:17px;background:#E8E8F0"></div>
<div style="left:54px;top:650px;width:38px;height:17px;background:#FFFFFF"></div>
<div style="left:93px;top:650px;width:117px;height:17px;background:#FFFFFF"></div>
<div style="left:211px;top:650px;width:53px;height:17px;background:#E8E8F0"></div>
<div style="left:265px;top:650px;width:44px;height:17px;background:#E8E8F0"></div>
<div style="left:310px;top:650px;width:44px;height:17px;background:#E8E8F0"></div>
<div style="left:355px;top:650px;width:44px;height:17px;background:#E8E8F0"></div>
<div style="left:400px;top:650px;width:44px;height:17px;background:#E8E8F0"></div>
<div style="left:445px;top:650px;width:44px;height:17px;background:#E8E8F0"></div>
<div style="left:490px;top:650px;width:312px;height:17px;background:#FFFFFF"></div>
<div style="left:803px;top:650px;width:71px;height:17px;background:#E8E8F0"></div>
<div style="left:875px;top:650px;width:71px;height:17px;background:#E8E8F0"></div>
<div style="left:947px;top:650px;width:56px;height:17px;background:#E8E8F0"></div>
<div style="left:14px;top:667px;width:989px;height:1px;background:#B7B7BE"></div>
<div style="left:-348px;top:652px;line-height:13px;width:400px;text-align:right;">15</div>
<div style="left:54px;top:652px;line-height:13px;overflow:hidden;width:38px">Beme...</div>
<div style="left:93px;top:652px;line-height:13px;overflow:hidden;width:116px">Bemerkungen</div>
<div style="left:490px;top:652px;line-height:13px;">Bemerkungen</div>
<div class="db" style="left:1004px;top:650px"><svg width="19" height="17" viewBox="0 0 19 17"><path d="M5.5 3.5L14.5 12.5M14.5 3.5L5.5 12.5" stroke="#FA4D5C" stroke-width="3.2" stroke-linecap="round"/></svg></div>
<div style="left:14px;top:668px;width:39px;height:17px;background:#C9D9F5"></div>
<div style="left:54px;top:668px;width:38px;height:17px;background:#E9F0FC"></div>
<div style="left:93px;top:668px;width:117px;height:17px;background:#E9F0FC"></div>
<div style="left:211px;top:668px;width:53px;height:17px;background:#C9D9F5"></div>
<div style="left:265px;top:668px;width:44px;height:17px;background:#C9D9F5"></div>
<div style="left:310px;top:668px;width:44px;height:17px;background:#C9D9F5"></div>
<div style="left:355px;top:668px;width:44px;height:17px;background:#C9D9F5"></div>
<div style="left:400px;top:668px;width:44px;height:17px;background:#C9D9F5"></div>
<div style="left:445px;top:668px;width:44px;height:17px;background:#C9D9F5"></div>
<div style="left:490px;top:668px;width:312px;height:17px;background:#E9F0FC"></div>
<div style="left:803px;top:668px;width:71px;height:17px;background:#C9D9F5"></div>
<div style="left:875px;top:668px;width:71px;height:17px;background:#C9D9F5"></div>
<div style="left:947px;top:668px;width:56px;height:17px;background:#C9D9F5"></div>
<div style="left:14px;top:685px;width:989px;height:1px;background:#B7B7BE"></div>
<div style="left:-348px;top:670px;line-height:13px;width:400px;text-align:right;">16</div>
<div style="left:54px;top:670px;line-height:13px;overflow:hidden;width:38px">Wirk...</div>
<div style="left:93px;top:670px;line-height:13px;overflow:hidden;width:116px">Wirkdatum</div>
<div style="left:490px;top:670px;line-height:13px;">Wirkdatum</div>
<div class="db" style="left:1004px;top:668px"><svg width="19" height="17" viewBox="0 0 19 17"><path d="M5.5 3.5L14.5 12.5M14.5 3.5L5.5 12.5" stroke="#FA4D5C" stroke-width="3.2" stroke-linecap="round"/></svg></div>
<div style="left:14px;top:686px;width:39px;height:17px;background:#E8E8F0"></div>
<div style="left:54px;top:686px;width:38px;height:17px;background:#FFFFFF"></div>
<div style="left:93px;top:686px;width:117px;height:17px;background:#FFFFFF"></div>
<div style="left:211px;top:686px;width:53px;height:17px;background:#E8E8F0"></div>
<div style="left:265px;top:686px;width:44px;height:17px;background:#E8E8F0"></div>
<div style="left:310px;top:686px;width:44px;height:17px;background:#E8E8F0"></div>
<div style="left:355px;top:686px;width:44px;height:17px;background:#E8E8F0"></div>
<div style="left:400px;top:686px;width:44px;height:17px;background:#E8E8F0"></div>
<div style="left:445px;top:686px;width:44px;height:17px;background:#E8E8F0"></div>
<div style="left:490px;top:686px;width:312px;height:17px;background:#FFFFFF"></div>
<div style="left:803px;top:686px;width:71px;height:17px;background:#E8E8F0"></div>
<div style="left:875px;top:686px;width:71px;height:17px;background:#E8E8F0"></div>
<div style="left:947px;top:686px;width:56px;height:17px;background:#E8E8F0"></div>
<div style="left:14px;top:703px;width:989px;height:1px;background:#B7B7BE"></div>
<div style="left:-348px;top:688px;line-height:13px;width:400px;text-align:right;">17</div>
<div style="left:54px;top:688px;line-height:13px;overflow:hidden;width:38px">besta...</div>
<div style="left:93px;top:688px;line-height:13px;overflow:hidden;width:116px">bestanden</div>
<div style="left:490px;top:688px;line-height:13px;">bestanden</div>
<div class="db" style="left:1004px;top:686px"><svg width="19" height="17" viewBox="0 0 19 17"><path d="M5.5 3.5L14.5 12.5M14.5 3.5L5.5 12.5" stroke="#FA4D5C" stroke-width="3.2" stroke-linecap="round"/></svg></div>
<div style="left:14px;top:704px;width:39px;height:17px;background:#C9D9F5"></div>
<div style="left:54px;top:704px;width:38px;height:17px;background:#E9F0FC"></div>
<div style="left:93px;top:704px;width:117px;height:17px;background:#E9F0FC"></div>
<div style="left:211px;top:704px;width:53px;height:17px;background:#C9D9F5"></div>
<div style="left:265px;top:704px;width:44px;height:17px;background:#C9D9F5"></div>
<div style="left:310px;top:704px;width:44px;height:17px;background:#C9D9F5"></div>
<div style="left:355px;top:704px;width:44px;height:17px;background:#C9D9F5"></div>
<div style="left:400px;top:704px;width:44px;height:17px;background:#C9D9F5"></div>
<div style="left:445px;top:704px;width:44px;height:17px;background:#C9D9F5"></div>
<div style="left:490px;top:704px;width:312px;height:17px;background:#E9F0FC"></div>
<div style="left:803px;top:704px;width:71px;height:17px;background:#C9D9F5"></div>
<div style="left:875px;top:704px;width:71px;height:17px;background:#C9D9F5"></div>
<div style="left:947px;top:704px;width:56px;height:17px;background:#C9D9F5"></div>
<div style="left:14px;top:721px;width:989px;height:1px;background:#B7B7BE"></div>
<div style="left:-348px;top:706px;line-height:13px;width:400px;text-align:right;">18</div>
<div style="left:54px;top:706px;line-height:13px;overflow:hidden;width:38px">teilg...</div>
<div style="left:93px;top:706px;line-height:13px;overflow:hidden;width:116px">teilgenommen</div>
<div style="left:490px;top:706px;line-height:13px;">teilgenommen</div>
<div class="db" style="left:1004px;top:704px"><svg width="19" height="17" viewBox="0 0 19 17"><path d="M5.5 3.5L14.5 12.5M14.5 3.5L5.5 12.5" stroke="#FA4D5C" stroke-width="3.2" stroke-linecap="round"/></svg></div>
<div style="left:14px;top:722px;width:39px;height:17px;background:#E8E8F0"></div>
<div style="left:54px;top:722px;width:38px;height:17px;background:#FFFFFF"></div>
<div style="left:93px;top:722px;width:117px;height:17px;background:#FFFFFF"></div>
<div style="left:211px;top:722px;width:53px;height:17px;background:#E8E8F0"></div>
<div style="left:265px;top:722px;width:44px;height:17px;background:#E8E8F0"></div>
<div style="left:310px;top:722px;width:44px;height:17px;background:#E8E8F0"></div>
<div style="left:355px;top:722px;width:44px;height:17px;background:#E8E8F0"></div>
<div style="left:400px;top:722px;width:44px;height:17px;background:#E8E8F0"></div>
<div style="left:445px;top:722px;width:44px;height:17px;background:#E8E8F0"></div>
<div style="left:490px;top:722px;width:312px;height:17px;background:#FFFFFF"></div>
<div style="left:803px;top:722px;width:71px;height:17px;background:#E8E8F0"></div>
<div style="left:875px;top:722px;width:71px;height:17px;background:#E8E8F0"></div>
<div style="left:947px;top:722px;width:56px;height:17px;background:#E8E8F0"></div>
<div style="left:14px;top:739px;width:989px;height:1px;background:#B7B7BE"></div>
<div style="left:-348px;top:724px;line-height:13px;width:400px;text-align:right;">19</div>
<div style="left:54px;top:724px;line-height:13px;overflow:hidden;width:38px">wied...</div>
<div style="left:93px;top:724px;line-height:13px;overflow:hidden;width:116px">wiederholt</div>
<div style="left:490px;top:724px;line-height:13px;">wiederholt</div>
<div class="db" style="left:1004px;top:722px"><svg width="19" height="17" viewBox="0 0 19 17"><path d="M5.5 3.5L14.5 12.5M14.5 3.5L5.5 12.5" stroke="#FA4D5C" stroke-width="3.2" stroke-linecap="round"/></svg></div>
<div style="left:14px;top:740px;width:39px;height:17px;background:#C9D9F5"></div>
<div style="left:54px;top:740px;width:38px;height:17px;background:#E9F0FC"></div>
<div style="left:93px;top:740px;width:117px;height:17px;background:#E9F0FC"></div>
<div style="left:211px;top:740px;width:53px;height:17px;background:#C9D9F5"></div>
<div style="left:265px;top:740px;width:44px;height:17px;background:#C9D9F5"></div>
<div style="left:310px;top:740px;width:44px;height:17px;background:#C9D9F5"></div>
<div style="left:355px;top:740px;width:44px;height:17px;background:#C9D9F5"></div>
<div style="left:400px;top:740px;width:44px;height:17px;background:#C9D9F5"></div>
<div style="left:445px;top:740px;width:44px;height:17px;background:#C9D9F5"></div>
<div style="left:490px;top:740px;width:312px;height:17px;background:#E9F0FC"></div>
<div style="left:803px;top:740px;width:71px;height:17px;background:#C9D9F5"></div>
<div style="left:875px;top:740px;width:71px;height:17px;background:#C9D9F5"></div>
<div style="left:947px;top:740px;width:56px;height:17px;background:#C9D9F5"></div>
<div style="left:14px;top:757px;width:989px;height:1px;background:#B7B7BE"></div>
<div style="left:-348px;top:742px;line-height:13px;width:400px;text-align:right;">20</div>
<div style="left:54px;top:742px;line-height:13px;overflow:hidden;width:38px">Abga...</div>
<div style="left:93px;top:742px;line-height:13px;overflow:hidden;width:116px">Abgang</div>
<div style="left:490px;top:742px;line-height:13px;">Abgang</div>
<div class="db" style="left:1004px;top:740px"><svg width="19" height="17" viewBox="0 0 19 17"><path d="M5.5 3.5L14.5 12.5M14.5 3.5L5.5 12.5" stroke="#FA4D5C" stroke-width="3.2" stroke-linecap="round"/></svg></div>
<div style="left:14px;top:758px;width:39px;height:17px;background:#E8E8F0"></div>
<div style="left:54px;top:758px;width:38px;height:17px;background:#FFFFFF"></div>
<div style="left:93px;top:758px;width:117px;height:17px;background:#FFFFFF"></div>
<div style="left:211px;top:758px;width:53px;height:17px;background:#E8E8F0"></div>
<div style="left:265px;top:758px;width:44px;height:17px;background:#E8E8F0"></div>
<div style="left:310px;top:758px;width:44px;height:17px;background:#E8E8F0"></div>
<div style="left:355px;top:758px;width:44px;height:17px;background:#E8E8F0"></div>
<div style="left:400px;top:758px;width:44px;height:17px;background:#E8E8F0"></div>
<div style="left:445px;top:758px;width:44px;height:17px;background:#E8E8F0"></div>
<div style="left:490px;top:758px;width:312px;height:17px;background:#FFFFFF"></div>
<div style="left:803px;top:758px;width:71px;height:17px;background:#E8E8F0"></div>
<div style="left:875px;top:758px;width:71px;height:17px;background:#E8E8F0"></div>
<div style="left:947px;top:758px;width:56px;height:17px;background:#E8E8F0"></div>
<div style="left:14px;top:775px;width:989px;height:1px;background:#B7B7BE"></div>
<div style="left:-348px;top:760px;line-height:13px;width:400px;text-align:right;">21</div>
<div style="left:54px;top:760px;line-height:13px;overflow:hidden;width:38px">Lob / ...</div>
<div style="left:93px;top:760px;line-height:13px;overflow:hidden;width:116px">Lob / Preis</div>
<div style="left:490px;top:760px;line-height:13px;">Lob / Preis</div>
<div class="db" style="left:1004px;top:758px"><svg width="19" height="17" viewBox="0 0 19 17"><path d="M5.5 3.5L14.5 12.5M14.5 3.5L5.5 12.5" stroke="#FA4D5C" stroke-width="3.2" stroke-linecap="round"/></svg></div>
<div style="left:14px;top:776px;width:39px;height:17px;background:#C9D9F5"></div>
<div style="left:54px;top:776px;width:38px;height:17px;background:#E9F0FC"></div>
<div style="left:93px;top:776px;width:117px;height:17px;background:#E9F0FC"></div>
<div style="left:211px;top:776px;width:53px;height:17px;background:#C9D9F5"></div>
<div style="left:265px;top:776px;width:44px;height:17px;background:#C9D9F5"></div>
<div style="left:310px;top:776px;width:44px;height:17px;background:#C9D9F5"></div>
<div style="left:355px;top:776px;width:44px;height:17px;background:#C9D9F5"></div>
<div style="left:400px;top:776px;width:44px;height:17px;background:#C9D9F5"></div>
<div style="left:445px;top:776px;width:44px;height:17px;background:#C9D9F5"></div>
<div style="left:490px;top:776px;width:312px;height:17px;background:#E9F0FC"></div>
<div style="left:803px;top:776px;width:71px;height:17px;background:#C9D9F5"></div>
<div style="left:875px;top:776px;width:71px;height:17px;background:#C9D9F5"></div>
<div style="left:947px;top:776px;width:56px;height:17px;background:#C9D9F5"></div>
<div style="left:14px;top:793px;width:989px;height:1px;background:#B7B7BE"></div>
<div style="left:-348px;top:778px;line-height:13px;width:400px;text-align:right;">22</div>
<div style="left:54px;top:778px;line-height:13px;overflow:hidden;width:38px">Durc...</div>
<div style="left:93px;top:778px;line-height:13px;overflow:hidden;width:116px">Durchschnitt 1</div>
<div style="left:490px;top:778px;line-height:13px;">Durchschnitt 1</div>
<div class="db" style="left:1004px;top:776px"><svg width="19" height="17" viewBox="0 0 19 17"><path d="M5.5 3.5L14.5 12.5M14.5 3.5L5.5 12.5" stroke="#FA4D5C" stroke-width="3.2" stroke-linecap="round"/></svg></div>
<div style="left:53px;top:398px;width:1px;height:394px;background:#B7B7BE"></div>
<div style="left:92px;top:398px;width:1px;height:394px;background:#B7B7BE"></div>
<div style="left:210px;top:398px;width:1px;height:394px;background:#B7B7BE"></div>
<div style="left:264px;top:398px;width:1px;height:394px;background:#B7B7BE"></div>
<div style="left:309px;top:398px;width:1px;height:394px;background:#B7B7BE"></div>
<div style="left:354px;top:398px;width:1px;height:394px;background:#B7B7BE"></div>
<div style="left:399px;top:398px;width:1px;height:394px;background:#B7B7BE"></div>
<div style="left:444px;top:398px;width:1px;height:394px;background:#B7B7BE"></div>
<div style="left:489px;top:398px;width:1px;height:394px;background:#B7B7BE"></div>
<div style="left:802px;top:398px;width:1px;height:394px;background:#B7B7BE"></div>
<div style="left:874px;top:398px;width:1px;height:394px;background:#B7B7BE"></div>
<div style="left:946px;top:398px;width:1px;height:394px;background:#B7B7BE"></div>
<div style="left:1003px;top:398px;width:1px;height:394px;background:#B7B7BE"></div>
<div style="left:1023px;top:398px;width:1px;height:394px;background:#B7B7BE"></div>
<div style="left:1041px;top:364px;width:1px;height:428px;background:#F7F7FC"></div>
<div style="left:565px;top:95px;width:411px;height:112px;box-sizing:border-box;border:2px solid #FF0000;box-shadow:3px 3px 4px rgba(0,0,0,0.35), inset 3px 3px 4px rgba(0,0,0,0.3)"></div>
<div style="left:19px;top:469px;width:917px;height:128px;box-sizing:border-box;border:2px solid #FF0000;box-shadow:3px 3px 4px rgba(0,0,0,0.35), inset 3px 3px 4px rgba(0,0,0,0.3)"></div>
<div style="left:5px;top:647px;width:801px;height:145px;box-sizing:border-box;border:2px solid #FF0000;box-shadow:3px 3px 4px rgba(0,0,0,0.35), inset 3px 3px 4px rgba(0,0,0,0.3)"></div>
<div style="left:1057px;top:0px;width:5px;height:792px;background:#F6F6FC"></div>
<div style="left:1062px;top:0px;width:1px;height:792px;background:#6E6E6E"></div>
<div style="left:1069px;top:9px;width:9px;height:1px;background:#A0A0A8"></div>
<div style="left:1080px;top:3px;line-height:13px;">Navigator</div>
<div style="left:1131px;top:9px;width:213px;height:1px;background:#A0A0A8"></div>
<div style="left:1069px;top:19px;width:275px;height:103px;border-top:1px solid #6A6A70;border-left:1px solid #707070;box-sizing:border-box;background:#EDEDF3"></div>
<div style="left:1070px;top:20px;width:272px;height:18px;background:#F2F2FB"></div>
<div style="left:1070px;top:37px;width:272px;height:3px;background:linear-gradient(#F1F1FA,#D8D8E0)"></div>
<div style="left:1070px;top:25px;line-height:13px;">Schul-/Dst.Nr.</div>
<svg style="position:absolute;left:1144px;top:28px" width="9" height="5"><path d="M0 5L4.5 0L9 5Z" fill="#2B3F55"/></svg>
<div style="left:1154px;top:25px;line-height:13px;">1</div>
<div style="left:1160px;top:23px;width:1px;height:14px;background:#C8C8D0"></div>
<div style="left:1162px;top:25px;line-height:13px;">Zweig</div>
<svg style="position:absolute;left:1235px;top:28px" width="9" height="5"><path d="M0 5L4.5 0L9 5Z" fill="#2B3F55"/></svg>
<div style="left:1245px;top:25px;line-height:13px;">2</div>
<div style="left:1251px;top:23px;width:1px;height:14px;background:#C8C8D0"></div>
<div style="left:1253px;top:25px;line-height:13px;">Schule</div>
<div style="left:1343px;top:22px;width:1px;height:17px;background:#1F3F7A"></div>
<div style="left:1341px;top:23px;width:1px;height:14px;background:#C8C8D0"></div>
<div style="left:1068px;top:38px;width:3px;height:83px;background:#A9A9B2"></div>
<div style="left:1071px;top:41px;width:271px;height:15px;background:#3D7FF6"></div>
<div style="left:1071px;top:56px;width:266px;height:5px;background:#97B5F3"></div>
<div style="left:1071px;top:61px;width:271px;height:10px;background:#CEDBF6"></div>
<div style="left:1071px;top:71px;width:271px;height:5px;background:#D3DEF6"></div>
<div style="left:1071px;top:76px;width:271px;height:15px;background:#EAE9F1"></div>
<div style="left:1071px;top:91px;width:266px;height:5px;background:#E5E7F3"></div>
<div style="left:1071px;top:96px;width:271px;height:15px;background:#CDDAF5"></div>
<div style="left:1071px;top:111px;width:266px;height:5px;background:#E6E6F0"></div>
<div style="left:1071px;top:116px;width:271px;height:5px;background:#EDEDF4"></div>
<div style="left:1071px;top:41px;width:5px;height:5px;background:#508CED"></div><div style="left:1076px;top:41px;width:5px;height:5px;background:#5789F6"></div><div style="left:1081px;top:41px;width:5px;height:5px;background:#4D7FE7"></div><div style="left:1086px;top:41px;width:5px;height:5px;background:#5A87F1"></div><div style="left:1091px;top:41px;width:5px;height:5px;background:#5F91F7"></div><div style="left:1096px;top:41px;width:5px;height:5px;background:#5C9BFD"></div><div style="left:1101px;top:41px;width:5px;height:5px;background:#4C84F2"></div><div style="left:1106px;top:41px;width:5px;height:5px;background:#5289EE"></div><div style="left:1111px;top:41px;width:5px;height:5px;background:#5389F3"></div><div style="left:1116px;top:41px;width:5px;height:5px;background:#5A8FFA"></div>
<div style="left:1071px;top:46px;width:5px;height:5px;background:#86B0F8"></div><div style="left:1076px;top:46px;width:5px;height:5px;background:#84A8F5"></div><div style="left:1081px;top:46px;width:5px;height:5px;background:#8CB9F7"></div><div style="left:1086px;top:46px;width:5px;height:5px;background:#8BA7F4"></div><div style="left:1091px;top:46px;width:5px;height:5px;background:#80A6EC"></div><div style="left:1096px;top:46px;width:5px;height:5px;background:#90B9FF"></div><div style="left:1101px;top:46px;width:5px;height:5px;background:#8BB3FE"></div><div style="left:1106px;top:46px;width:5px;height:5px;background:#8BA8F8"></div><div style="left:1111px;top:46px;width:5px;height:5px;background:#93B5F7"></div><div style="left:1116px;top:46px;width:5px;height:5px;background:#89A5F3"></div>
<div style="left:1071px;top:51px;width:5px;height:5px;background:#5288F2"></div><div style="left:1076px;top:51px;width:5px;height:5px;background:#538BF3"></div><div style="left:1081px;top:51px;width:5px;height:5px;background:#558CF2"></div><div style="left:1086px;top:51px;width:5px;height:5px;background:#6897FB"></div><div style="left:1091px;top:51px;width:5px;height:5px;background:#5F96EE"></div><div style="left:1096px;top:51px;width:5px;height:5px;background:#548AEF"></div><div style="left:1101px;top:51px;width:5px;height:5px;background:#5C8FF6"></div><div style="left:1106px;top:51px;width:5px;height:5px;background:#5C96F5"></div><div style="left:1111px;top:51px;width:5px;height:5px;background:#5F96F0"></div><div style="left:1116px;top:51px;width:5px;height:5px;background:#69A0FF"></div>
<div style="left:1071px;top:61px;width:5px;height:5px;background:#AAABC5"></div><div style="left:1076px;top:61px;width:5px;height:5px;background:#9EA4B7"></div><div style="left:1081px;top:61px;width:5px;height:5px;background:#A4A9BD"></div><div style="left:1086px;top:61px;width:5px;height:5px;background:#A2A3C0"></div><div style="left:1091px;top:61px;width:5px;height:5px;background:#ACB2C6"></div><div style="left:1096px;top:61px;width:5px;height:5px;background:#A6B3C8"></div><div style="left:1101px;top:61px;width:5px;height:5px;background:#ACADC0"></div><div style="left:1106px;top:61px;width:5px;height:5px;background:#A7B3BE"></div><div style="left:1111px;top:61px;width:5px;height:5px;background:#A7A7B6"></div><div style="left:1116px;top:61px;width:5px;height:5px;background:#A9B4CC"></div>
<div style="left:1071px;top:66px;width:5px;height:5px;background:#9694AA"></div><div style="left:1076px;top:66px;width:5px;height:5px;background:#7B7C94"></div><div style="left:1081px;top:66px;width:5px;height:5px;background:#7B859D"></div><div style="left:1086px;top:66px;width:5px;height:5px;background:#979AAE"></div><div style="left:1091px;top:66px;width:5px;height:5px;background:#7B7C8D"></div><div style="left:1096px;top:66px;width:5px;height:5px;background:#70738D"></div><div style="left:1101px;top:66px;width:5px;height:5px;background:#97A0B6"></div><div style="left:1106px;top:66px;width:5px;height:5px;background:#9697AC"></div><div style="left:1111px;top:66px;width:5px;height:5px;background:#767E96"></div><div style="left:1116px;top:66px;width:5px;height:5px;background:#9398AF"></div>
<div style="left:1071px;top:81px;width:5px;height:5px;background:#878891"></div><div style="left:1076px;top:81px;width:5px;height:5px;background:#A29DAE"></div><div style="left:1081px;top:81px;width:5px;height:5px;background:#949497"></div><div style="left:1086px;top:81px;width:5px;height:5px;background:#999497"></div><div style="left:1091px;top:81px;width:5px;height:5px;background:#838A93"></div><div style="left:1096px;top:81px;width:5px;height:5px;background:#8C8C92"></div><div style="left:1101px;top:81px;width:5px;height:5px;background:#928A93"></div><div style="left:1106px;top:81px;width:5px;height:5px;background:#AEABB9"></div><div style="left:1111px;top:81px;width:5px;height:5px;background:#999799"></div><div style="left:1116px;top:81px;width:5px;height:5px;background:#8A8796"></div>
<div style="left:1071px;top:86px;width:5px;height:5px;background:#BBB6C7"></div><div style="left:1076px;top:86px;width:5px;height:5px;background:#BFBECA"></div><div style="left:1081px;top:86px;width:5px;height:5px;background:#C6BFC8"></div><div style="left:1086px;top:86px;width:5px;height:5px;background:#BEC1C6"></div><div style="left:1091px;top:86px;width:5px;height:5px;background:#B8AFBA"></div><div style="left:1096px;top:86px;width:5px;height:5px;background:#CBC6D0"></div><div style="left:1101px;top:86px;width:5px;height:5px;background:#C9BECC"></div><div style="left:1106px;top:86px;width:5px;height:5px;background:#B9BDC2"></div><div style="left:1111px;top:86px;width:5px;height:5px;background:#C8C8CB"></div><div style="left:1116px;top:86px;width:5px;height:5px;background:#C7C5CF"></div>
<div style="left:1071px;top:96px;width:5px;height:5px;background:#B1B8D6"></div><div style="left:1076px;top:96px;width:5px;height:5px;background:#BAC3D3"></div><div style="left:1081px;top:96px;width:5px;height:5px;background:#B8BFCE"></div><div style="left:1086px;top:96px;width:5px;height:5px;background:#A9ADC7"></div><div style="left:1091px;top:96px;width:5px;height:5px;background:#ABB4CE"></div><div style="left:1096px;top:96px;width:5px;height:5px;background:#ADB5C6"></div><div style="left:1101px;top:96px;width:5px;height:5px;background:#BFBEDF"></div><div style="left:1106px;top:96px;width:5px;height:5px;background:#AFBDD3"></div><div style="left:1111px;top:96px;width:5px;height:5px;background:#AAB3C9"></div><div style="left:1116px;top:96px;width:5px;height:5px;background:#A9B6C6"></div>
<div style="left:1071px;top:101px;width:5px;height:5px;background:#9194B1"></div><div style="left:1076px;top:101px;width:5px;height:5px;background:#9497BC"></div><div style="left:1081px;top:101px;width:5px;height:5px;background:#A09DB9"></div><div style="left:1086px;top:101px;width:5px;height:5px;background:#82849C"></div><div style="left:1091px;top:101px;width:5px;height:5px;background:#9299AC"></div><div style="left:1096px;top:101px;width:5px;height:5px;background:#888CA7"></div><div style="left:1101px;top:101px;width:5px;height:5px;background:#7B8BA2"></div><div style="left:1106px;top:101px;width:5px;height:5px;background:#858AA6"></div><div style="left:1111px;top:101px;width:5px;height:5px;background:#8583A7"></div><div style="left:1116px;top:101px;width:5px;height:5px;background:#8C96B5"></div>
<div style="left:1071px;top:106px;width:5px;height:5px;background:#B6C5DC"></div><div style="left:1076px;top:106px;width:5px;height:5px;background:#B4BCD8"></div><div style="left:1081px;top:106px;width:5px;height:5px;background:#B9C9DD"></div><div style="left:1086px;top:106px;width:5px;height:5px;background:#BCC8DE"></div><div style="left:1091px;top:106px;width:5px;height:5px;background:#B5C7DF"></div><div style="left:1096px;top:106px;width:5px;height:5px;background:#B9C9D9"></div><div style="left:1101px;top:106px;width:5px;height:5px;background:#C5D0EE"></div><div style="left:1106px;top:106px;width:5px;height:5px;background:#BDCAE7"></div><div style="left:1111px;top:106px;width:5px;height:5px;background:#C0C9E2"></div><div style="left:1116px;top:106px;width:5px;height:5px;background:#BCC2DD"></div>
<div style="left:1071px;top:116px;width:5px;height:5px;background:#BCB4B9"></div><div style="left:1076px;top:116px;width:5px;height:5px;background:#BEBCC0"></div><div style="left:1081px;top:116px;width:5px;height:5px;background:#BBBAC2"></div><div style="left:1086px;top:116px;width:5px;height:5px;background:#BBB6C5"></div><div style="left:1091px;top:116px;width:5px;height:5px;background:#CFCAD8"></div><div style="left:1096px;top:116px;width:5px;height:5px;background:#BDB7C2"></div><div style="left:1101px;top:116px;width:5px;height:5px;background:#C3BDC7"></div><div style="left:1106px;top:116px;width:5px;height:5px;background:#B5B1BA"></div><div style="left:1111px;top:116px;width:5px;height:5px;background:#B3B4B9"></div><div style="left:1116px;top:116px;width:5px;height:5px;background:#C6C7CB"></div>
<div style="left:1161px;top:41px;width:5px;height:5px;background:#6090F8"></div><div style="left:1166px;top:41px;width:5px;height:5px;background:#5D9AFF"></div><div style="left:1171px;top:41px;width:5px;height:5px;background:#5289EE"></div>
<div style="left:1161px;top:46px;width:5px;height:5px;background:#93AFFC"></div><div style="left:1166px;top:46px;width:5px;height:5px;background:#8EB1FB"></div><div style="left:1171px;top:46px;width:5px;height:5px;background:#90B2FB"></div>
<div style="left:1161px;top:51px;width:5px;height:5px;background:#528AEE"></div><div style="left:1166px;top:51px;width:5px;height:5px;background:#5A8CEF"></div><div style="left:1171px;top:51px;width:5px;height:5px;background:#6296F2"></div>
<div style="left:1161px;top:61px;width:5px;height:5px;background:#B8BACD"></div><div style="left:1166px;top:61px;width:5px;height:5px;background:#ACB9C6"></div><div style="left:1171px;top:61px;width:5px;height:5px;background:#A0ABB8"></div><div style="left:1176px;top:61px;width:5px;height:5px;background:#B9B8CA"></div><div style="left:1181px;top:61px;width:5px;height:5px;background:#AFB5C6"></div>
<div style="left:1161px;top:66px;width:5px;height:5px;background:#868AA0"></div><div style="left:1166px;top:66px;width:5px;height:5px;background:#8D93A1"></div><div style="left:1171px;top:66px;width:5px;height:5px;background:#71798E"></div><div style="left:1176px;top:66px;width:5px;height:5px;background:#8A90A4"></div><div style="left:1181px;top:66px;width:5px;height:5px;background:#808C99"></div>
<div style="left:1161px;top:81px;width:5px;height:5px;background:#B2A5B4"></div><div style="left:1166px;top:81px;width:5px;height:5px;background:#ABA3AB"></div><div style="left:1171px;top:81px;width:5px;height:5px;background:#908594"></div><div style="left:1176px;top:81px;width:5px;height:5px;background:#888B8B"></div><div style="left:1181px;top:81px;width:5px;height:5px;background:#A6A8B0"></div>
<div style="left:1161px;top:86px;width:5px;height:5px;background:#C0B9BC"></div><div style="left:1166px;top:86px;width:5px;height:5px;background:#B5B2B8"></div><div style="left:1171px;top:86px;width:5px;height:5px;background:#B7B5C3"></div><div style="left:1176px;top:86px;width:5px;height:5px;background:#B8B7B6"></div><div style="left:1181px;top:86px;width:5px;height:5px;background:#D3D3D4"></div>
<div style="left:1161px;top:96px;width:5px;height:5px;background:#AEBDD0"></div><div style="left:1166px;top:96px;width:5px;height:5px;background:#AEB4C9"></div><div style="left:1171px;top:96px;width:5px;height:5px;background:#AEAFCF"></div><div style="left:1176px;top:96px;width:5px;height:5px;background:#AAB5C9"></div><div style="left:1181px;top:96px;width:5px;height:5px;background:#B4BCD3"></div><div style="left:1186px;top:96px;width:5px;height:5px;background:#B9C1D5"></div><div style="left:1191px;top:96px;width:5px;height:5px;background:#B0C1D5"></div><div style="left:1196px;top:96px;width:5px;height:5px;background:#B8BCD1"></div>
<div style="left:1161px;top:101px;width:5px;height:5px;background:#9AA7BF"></div><div style="left:1166px;top:101px;width:5px;height:5px;background:#8B96A7"></div><div style="left:1171px;top:101px;width:5px;height:5px;background:#939EB6"></div><div style="left:1176px;top:101px;width:5px;height:5px;background:#7F88AA"></div><div style="left:1181px;top:101px;width:5px;height:5px;background:#8C9CB7"></div><div style="left:1186px;top:101px;width:5px;height:5px;background:#8992AB"></div><div style="left:1191px;top:101px;width:5px;height:5px;background:#858FA9"></div><div style="left:1196px;top:101px;width:5px;height:5px;background:#979DB3"></div>
<div style="left:1161px;top:106px;width:5px;height:5px;background:#BEC6E0"></div><div style="left:1166px;top:106px;width:5px;height:5px;background:#B4C6D6"></div><div style="left:1171px;top:106px;width:5px;height:5px;background:#C1CEE0"></div><div style="left:1176px;top:106px;width:5px;height:5px;background:#B8C4DE"></div><div style="left:1181px;top:106px;width:5px;height:5px;background:#CDD7E7"></div><div style="left:1186px;top:106px;width:5px;height:5px;background:#B9C5DA"></div><div style="left:1191px;top:106px;width:5px;height:5px;background:#BBCAEA"></div><div style="left:1196px;top:106px;width:5px;height:5px;background:#CAD6E7"></div>
<div style="left:1161px;top:116px;width:5px;height:5px;background:#B6B8C0"></div><div style="left:1166px;top:116px;width:5px;height:5px;background:#D1CED5"></div><div style="left:1171px;top:116px;width:5px;height:5px;background:#C3BBCA"></div><div style="left:1176px;top:116px;width:5px;height:5px;background:#C2BDBF"></div><div style="left:1181px;top:116px;width:5px;height:5px;background:#B8BAC1"></div>
<div style="left:1251px;top:41px;width:5px;height:5px;background:#4B86EF"></div><div style="left:1256px;top:41px;width:5px;height:5px;background:#528CED"></div><div style="left:1261px;top:41px;width:5px;height:5px;background:#538FF3"></div><div style="left:1266px;top:41px;width:5px;height:5px;background:#5F92FA"></div><div style="left:1271px;top:41px;width:5px;height:5px;background:#6394F9"></div><div style="left:1276px;top:41px;width:5px;height:5px;background:#5A8DF3"></div><div style="left:1281px;top:41px;width:5px;height:5px;background:#608EF3"></div><div style="left:1286px;top:41px;width:5px;height:5px;background:#538CEF"></div><div style="left:1291px;top:41px;width:5px;height:5px;background:#6093F8"></div><div style="left:1296px;top:41px;width:5px;height:5px;background:#5F9BFC"></div>
<div style="left:1251px;top:46px;width:5px;height:5px;background:#86A4F5"></div><div style="left:1256px;top:46px;width:5px;height:5px;background:#86AAF5"></div><div style="left:1261px;top:46px;width:5px;height:5px;background:#93ADF9"></div><div style="left:1266px;top:46px;width:5px;height:5px;background:#88A2EA"></div><div style="left:1271px;top:46px;width:5px;height:5px;background:#7EA8F1"></div><div style="left:1276px;top:46px;width:5px;height:5px;background:#95B8FA"></div><div style="left:1281px;top:46px;width:5px;height:5px;background:#87A9E9"></div><div style="left:1286px;top:46px;width:5px;height:5px;background:#8CB0F8"></div><div style="left:1291px;top:46px;width:5px;height:5px;background:#7CA3ED"></div><div style="left:1296px;top:46px;width:5px;height:5px;background:#90BEFE"></div>
<div style="left:1251px;top:51px;width:5px;height:5px;background:#5E94F2"></div><div style="left:1256px;top:51px;width:5px;height:5px;background:#5489F2"></div><div style="left:1261px;top:51px;width:5px;height:5px;background:#5692EA"></div><div style="left:1266px;top:51px;width:5px;height:5px;background:#5F95EE"></div><div style="left:1271px;top:51px;width:5px;height:5px;background:#4F8FE9"></div><div style="left:1276px;top:51px;width:5px;height:5px;background:#6797F8"></div><div style="left:1281px;top:51px;width:5px;height:5px;background:#689AFF"></div><div style="left:1286px;top:51px;width:5px;height:5px;background:#578AF5"></div><div style="left:1291px;top:51px;width:5px;height:5px;background:#67A1F8"></div><div style="left:1296px;top:51px;width:5px;height:5px;background:#5894F6"></div>
<div style="left:1251px;top:61px;width:5px;height:5px;background:#A8AFC3"></div><div style="left:1256px;top:61px;width:5px;height:5px;background:#B4C0D3"></div><div style="left:1261px;top:61px;width:5px;height:5px;background:#B9BCCB"></div><div style="left:1266px;top:61px;width:5px;height:5px;background:#A8B2BC"></div><div style="left:1271px;top:61px;width:5px;height:5px;background:#A9A8B9"></div><div style="left:1276px;top:61px;width:5px;height:5px;background:#A3A5C0"></div><div style="left:1281px;top:61px;width:5px;height:5px;background:#BDB9CA"></div><div style="left:1286px;top:61px;width:5px;height:5px;background:#A4ABBB"></div><div style="left:1291px;top:61px;width:5px;height:5px;background:#A6AEC1"></div><div style="left:1296px;top:61px;width:5px;height:5px;background:#B8BAC7"></div>
<div style="left:1251px;top:66px;width:5px;height:5px;background:#9197AA"></div><div style="left:1256px;top:66px;width:5px;height:5px;background:#8B8FA4"></div><div style="left:1261px;top:66px;width:5px;height:5px;background:#7C7C8E"></div><div style="left:1266px;top:66px;width:5px;height:5px;background:#878496"></div><div style="left:1271px;top:66px;width:5px;height:5px;background:#949BA5"></div><div style="left:1276px;top:66px;width:5px;height:5px;background:#888CA1"></div><div style="left:1281px;top:66px;width:5px;height:5px;background:#717287"></div><div style="left:1286px;top:66px;width:5px;height:5px;background:#99A1AF"></div><div style="left:1291px;top:66px;width:5px;height:5px;background:#9494AF"></div><div style="left:1296px;top:66px;width:5px;height:5px;background:#939BB1"></div>
<div style="left:1251px;top:81px;width:5px;height:5px;background:#8A8590"></div><div style="left:1256px;top:81px;width:5px;height:5px;background:#8E8D91"></div><div style="left:1261px;top:81px;width:5px;height:5px;background:#808286"></div><div style="left:1266px;top:81px;width:5px;height:5px;background:#8C9198"></div><div style="left:1271px;top:81px;width:5px;height:5px;background:#80818D"></div><div style="left:1276px;top:81px;width:5px;height:5px;background:#9998A8"></div><div style="left:1281px;top:81px;width:5px;height:5px;background:#918FA1"></div><div style="left:1286px;top:81px;width:5px;height:5px;background:#908C96"></div><div style="left:1291px;top:81px;width:5px;height:5px;background:#ADA4AC"></div><div style="left:1296px;top:81px;width:5px;height:5px;background:#9E9AAE"></div>
<div style="left:1251px;top:86px;width:5px;height:5px;background:#C5BECC"></div><div style="left:1256px;top:86px;width:5px;height:5px;background:#BEBBC9"></div><div style="left:1261px;top:86px;width:5px;height:5px;background:#CDC1CF"></div><div style="left:1266px;top:86px;width:5px;height:5px;background:#C0B9C3"></div><div style="left:1271px;top:86px;width:5px;height:5px;background:#C9BDCA"></div><div style="left:1276px;top:86px;width:5px;height:5px;background:#D2C7CE"></div><div style="left:1281px;top:86px;width:5px;height:5px;background:#D6CFD1"></div><div style="left:1286px;top:86px;width:5px;height:5px;background:#CFD3D8"></div><div style="left:1291px;top:86px;width:5px;height:5px;background:#C9CFD0"></div><div style="left:1296px;top:86px;width:5px;height:5px;background:#C5C3C3"></div>
<div style="left:1251px;top:96px;width:5px;height:5px;background:#ABB4CA"></div><div style="left:1256px;top:96px;width:5px;height:5px;background:#A7B5CF"></div><div style="left:1261px;top:96px;width:5px;height:5px;background:#A9B3C3"></div><div style="left:1266px;top:96px;width:5px;height:5px;background:#B4C1D9"></div><div style="left:1271px;top:96px;width:5px;height:5px;background:#B2BBD5"></div><div style="left:1276px;top:96px;width:5px;height:5px;background:#B2B7CF"></div><div style="left:1281px;top:96px;width:5px;height:5px;background:#A9B0C5"></div><div style="left:1286px;top:96px;width:5px;height:5px;background:#BABED3"></div><div style="left:1291px;top:96px;width:5px;height:5px;background:#ACB5D0"></div><div style="left:1296px;top:96px;width:5px;height:5px;background:#A9B1C4"></div><div style="left:1301px;top:96px;width:5px;height:5px;background:#AFBFD8"></div>
<div style="left:1251px;top:101px;width:5px;height:5px;background:#8B98B0"></div><div style="left:1256px;top:101px;width:5px;height:5px;background:#9BACC8"></div><div style="left:1261px;top:101px;width:5px;height:5px;background:#9C9CC0"></div><div style="left:1266px;top:101px;width:5px;height:5px;background:#959CAD"></div><div style="left:1271px;top:101px;width:5px;height:5px;background:#9F9DBA"></div><div style="left:1276px;top:101px;width:5px;height:5px;background:#95A5B8"></div><div style="left:1281px;top:101px;width:5px;height:5px;background:#97A3C2"></div><div style="left:1286px;top:101px;width:5px;height:5px;background:#828DA5"></div><div style="left:1291px;top:101px;width:5px;height:5px;background:#7B83A6"></div><div style="left:1296px;top:101px;width:5px;height:5px;background:#9B9ABB"></div><div style="left:1301px;top:101px;width:5px;height:5px;background:#828BA2"></div>
<div style="left:1251px;top:106px;width:5px;height:5px;background:#C8D2F0"></div><div style="left:1256px;top:106px;width:5px;height:5px;background:#BEC3DA"></div><div style="left:1261px;top:106px;width:5px;height:5px;background:#C3D5EA"></div><div style="left:1266px;top:106px;width:5px;height:5px;background:#C0C6DD"></div><div style="left:1271px;top:106px;width:5px;height:5px;background:#BFD2E5"></div><div style="left:1276px;top:106px;width:5px;height:5px;background:#C8CDE8"></div><div style="left:1281px;top:106px;width:5px;height:5px;background:#B6C0DC"></div><div style="left:1286px;top:106px;width:5px;height:5px;background:#C1CCEB"></div><div style="left:1291px;top:106px;width:5px;height:5px;background:#B5C4D6"></div><div style="left:1296px;top:106px;width:5px;height:5px;background:#B4BBD8"></div><div style="left:1301px;top:106px;width:5px;height:5px;background:#BBC5DA"></div>
<div style="left:1251px;top:116px;width:5px;height:5px;background:#C6C0D0"></div><div style="left:1256px;top:116px;width:5px;height:5px;background:#B9B6C3"></div><div style="left:1261px;top:116px;width:5px;height:5px;background:#D0C9CE"></div><div style="left:1266px;top:116px;width:5px;height:5px;background:#BAB7BA"></div><div style="left:1271px;top:116px;width:5px;height:5px;background:#C6CACE"></div><div style="left:1276px;top:116px;width:5px;height:5px;background:#C2B6C2"></div><div style="left:1281px;top:116px;width:5px;height:5px;background:#BEBAC9"></div><div style="left:1286px;top:116px;width:5px;height:5px;background:#B8BBB8"></div><div style="left:1291px;top:116px;width:5px;height:5px;background:#BEBAC2"></div><div style="left:1296px;top:116px;width:5px;height:5px;background:#C7C7CD"></div>
<div style="left:1069px;top:127px;width:275px;height:53px;border-top:1px solid #6A6A70;border-left:1px solid #A0A0A8;box-sizing:border-box;background:#E8E8F0"></div>
<div style="left:1070px;top:128px;width:274px;height:20px;background:#F2F2FB"></div>
<div style="left:1070px;top:145px;width:274px;height:3px;background:linear-gradient(#F1F1FA,#D8D8E0)"></div>
<div style="left:1070px;top:133px;line-height:13px;">Zeugnisart (Anzeigeform)</div>
<svg style="position:absolute;left:1330px;top:137px" width="9" height="5"><path d="M0 0L8 0L4 4.5Z" fill="#2B3F55"/></svg>
<div style="left:1341px;top:132px;width:1px;height:13px;background:#C8C8D0"></div>
<div style="left:1343px;top:130px;width:1px;height:17px;background:#1F3F7A"></div>
<div style="left:1070px;top:149px;width:272px;height:17px;background:#3D7FF5"></div>
<div style="left:1072px;top:151px;line-height:13px;color:#fff">Abschlusszeugnis</div>
<div style="left:1070px;top:166px;width:274px;height:13px;overflow:hidden"><div style="left:2px;top:3px;line-height:13px">Abgangszeugnis</div></div>
<div style="left:1069px;top:181px;width:275px;height:1px;background:#FFFFFF"></div>
<div style="left:1069px;top:192px;width:275px;height:1px;background:#707070"></div>
<div style="left:1069px;top:196px;width:90px;height:23px;box-sizing:border-box;border:1px solid #22447F;border-radius:3px;background:linear-gradient(#FBFBFD,#E9E9F1 50%,#CCCFDC);text-align:center;line-height:21px">Filter</div>
<div style="left:1166px;top:201px;width:13px;height:13px;box-sizing:border-box;border:1px solid #D6D6DC;background:#F7F7F9"></div>
<div style="left:1069px;top:229px;width:90px;height:23px;box-sizing:border-box;border:1px solid #22447F;border-radius:3px;background:linear-gradient(#FBFBFD,#E9E9F1 50%,#CCCFDC);text-align:center;line-height:21px">Suche</div>
<div style="left:1166px;top:234px;width:13px;height:13px;box-sizing:border-box;border:1px solid #D6D6DC;background:#F7F7F9"></div>
<div style="left:1069px;top:255px;width:275px;height:1px;background:#FFFFFF"></div>
<div style="left:1069px;top:261px;width:275px;height:531px;border-top:1px solid #6A6A70;border-left:1px solid #A0A0A8;box-sizing:border-box;background:#E8E8F0"></div>
<div style="left:1070px;top:262px;width:274px;height:21px;background:#F2F2FB"></div>
<div style="left:1070px;top:279px;width:274px;height:4px;background:linear-gradient(#F2F2FB,#D5D5DD)"></div>
<div style="left:1070px;top:267px;line-height:13px;">Bezeichnung</div>
<svg style="position:absolute;left:1330px;top:270px" width="9" height="5"><path d="M0 5L4.5 0L9 5Z" fill="#2B3F55"/></svg>
<div style="left:1342px;top:266px;width:1px;height:13px;background:#C8C8D0"></div>
<div style="left:1070px;top:283px;width:273px;height:17px;background:#E8E8F0"></div>
<div style="left:1071px;top:285px;line-height:13px;">2BKH</div>
<div style="left:1070px;top:301px;width:273px;height:17px;background:#C9D9F5"></div>
<div style="left:1071px;top:303px;line-height:13px;">2BKI</div>
<div style="left:1070px;top:319px;width:273px;height:17px;background:#E8E8F0"></div>
<div style="left:1071px;top:321px;line-height:13px;">2BKSP</div>
<div style="left:1070px;top:337px;width:273px;height:17px;background:#C9D9F5"></div>
<div style="left:1071px;top:339px;line-height:13px;">3BFA</div>
<div style="left:1070px;top:355px;width:273px;height:17px;background:#E8E8F0"></div>
<div style="left:1071px;top:357px;line-height:13px;">3BFE</div>
<div style="left:1070px;top:373px;width:273px;height:17px;background:#C9D9F5"></div>
<div style="left:1071px;top:375px;line-height:13px;">3BFM</div>
<div style="left:1070px;top:391px;width:273px;height:17px;background:#E8E8F0"></div>
<div style="left:1071px;top:393px;line-height:13px;">3BFMunguelt</div>
<div style="left:1070px;top:409px;width:273px;height:17px;background:#C9D9F5"></div>
<div style="left:1071px;top:411px;line-height:13px;">3BFMUV</div>
<div style="left:1070px;top:427px;width:273px;height:17px;background:#E8E8F0"></div>
<div style="left:1071px;top:429px;line-height:13px;">3BFP Altenpflegehilfe</div>
<div style="left:1070px;top:445px;width:273px;height:17px;background:#C9D9F5"></div>
<div style="left:1071px;top:447px;line-height:13px;">3BKGD</div>
<div style="left:1070px;top:463px;width:273px;height:17px;background:#E8E8F0"></div>
<div style="left:1071px;top:465px;line-height:13px;">3BKMTR</div>
<div style="left:1070px;top:481px;width:273px;height:17px;background:#C9D9F5"></div>
<div style="left:1071px;top:483px;line-height:13px;">3BKR</div>
<div style="left:1070px;top:499px;width:273px;height:17px;background:#E8E8F0"></div>
<div style="left:1071px;top:501px;line-height:13px;">3BKWA-IWIA</div>
<div style="left:1070px;top:517px;width:273px;height:17px;background:#C9D9F5"></div>
<div style="left:1071px;top:519px;line-height:13px;">AV (2BFS1)</div>
<div style="left:1070px;top:535px;width:273px;height:17px;background:#E8E8F0"></div>
<div style="left:1071px;top:537px;line-height:13px;">AV (2BFS2)</div>
<div style="left:1070px;top:553px;width:273px;height:17px;background:#C9D9F5"></div>
<div style="left:1071px;top:555px;line-height:13px;">AV (oHS)</div>
<div style="left:1070px;top:571px;width:273px;height:17px;background:#E8E8F0"></div>
<div style="left:1071px;top:573px;line-height:13px;">AV2BFS1</div>
<div style="left:1070px;top:589px;width:273px;height:17px;background:#C9D9F5"></div>
<div style="left:1071px;top:591px;line-height:13px;">AV2mHS</div>
<div style="left:1070px;top:607px;width:273px;height:17px;background:#E8E8F0"></div>
<div style="left:1071px;top:609px;line-height:13px;">AV2oHS</div>
<div style="left:1070px;top:625px;width:273px;height:17px;background:#C9D9F5"></div>
<div style="left:1071px;top:627px;line-height:13px;">AVmHS</div>
<div style="left:1070px;top:643px;width:273px;height:17px;background:#E8E8F0"></div>
<div style="left:1071px;top:645px;line-height:13px;">BFP-Drittelzeugnis</div>
<div style="left:1070px;top:661px;width:273px;height:17px;background:#C9D9F5"></div>
<div style="left:1071px;top:663px;line-height:13px;">BFPE(AVoHS)</div>
<div style="left:1070px;top:679px;width:273px;height:17px;background:#3D7FF5"></div>
<div style="left:1071px;top:681px;line-height:13px;color:#fff">BFSA</div>
<div style="left:1070px;top:697px;width:273px;height:17px;background:#C9D9F5"></div>
<div style="left:1071px;top:699px;line-height:13px;">BFSAID</div>
<div style="left:1070px;top:715px;width:273px;height:17px;background:#E8E8F0"></div>
<div style="left:1071px;top:717px;line-height:13px;">BKSPIT</div>
<div style="left:1070px;top:733px;width:273px;height:17px;background:#C9D9F5"></div>
<div style="left:1071px;top:735px;line-height:13px;">BS</div>
<div style="left:1070px;top:751px;width:273px;height:17px;background:#E8E8F0"></div>
<div style="left:1071px;top:753px;line-height:13px;">BS-W(FHR)</div>
<div style="left:1070px;top:769px;width:273px;height:17px;background:#C9D9F5"></div>
<div style="left:1071px;top:771px;line-height:13px;">C</div>
<div style="left:1070px;top:787px;width:273px;height:17px;background:#E8E8F0"></div>
<div style="left:1071px;top:789px;line-height:13px;">FTWI</div>
</body></html>
